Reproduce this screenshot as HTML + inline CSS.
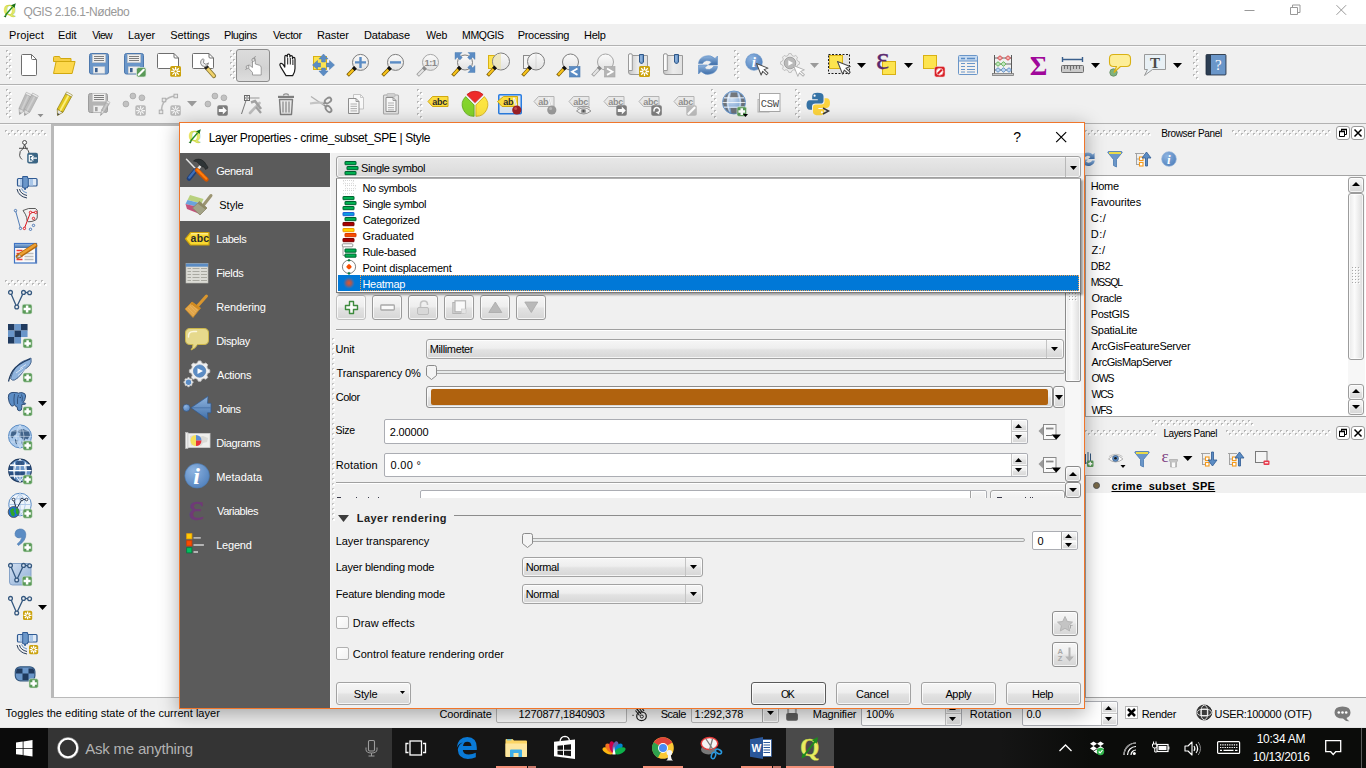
<!DOCTYPE html>
<html lang="en"><head><meta charset="utf-8"><title>QGIS 2.16.1-Nødebo</title>
<style>
html,body{margin:0;padding:0}
body{width:1366px;height:768px;overflow:hidden;position:relative;background:#f0f0f0;font-family:"Liberation Sans",sans-serif;font-size:11px;color:#000}
div,span,svg{position:absolute;box-sizing:border-box}
.t{line-height:1;white-space:nowrap}
.i{overflow:visible}
.btn{border:1px solid #a2a2a2;border-radius:3px;background:linear-gradient(#f6f6f6 0%,#eeeeee 45%,#e2e2e2 55%,#d6d6d6 100%);box-shadow:inset 0 0 0 1px rgba(255,255,255,.75)}
.btn.def{border-color:#5a5a5a}
.fld{border:1px solid #abadb3;border-radius:2px;background:#fff}
</style></head>
<body>
<!-- QGIS main window -->
<div class="titlebar" style="left:0;top:0">
<div style="left:0px;top:0px;width:1366px;height:24px;background:#fff"></div>
<span class="t" style="left:23.5px;top:6px;font-size:12px;color:#999;letter-spacing:-0.43px;">QGIS 2.16.1-Nødebo</span>
<svg class="i" style="left:1244px;top:4px;" width="110" height="14" viewBox="0 0 110 14"><path d="M0.5 6.5h10" stroke="#999" fill="none"/><path d="M46.5 3.5h7v7h-7z M48.5 3.5v-2.5h7.5v7.5h-2.5" stroke="#999" fill="none"/><path d="M92.5 1.2l9.6 9.6 M102.1 1.2l-9.6 9.6" stroke="#999" fill="none"/></svg>
</div>
<div class="menubar" style="left:0;top:0">
<div style="left:0px;top:24px;width:1366px;height:21px;background:#f0f0f0"></div>
<span class="t" style="left:9.1px;top:30px;font-size:11px;letter-spacing:0.07px;">Project</span>
<span class="t" style="left:58.1px;top:30px;font-size:11px;letter-spacing:-0.18px;">Edit</span>
<span class="t" style="left:92.2px;top:30px;font-size:10.5px;letter-spacing:-0.70px;">View</span>
<span class="t" style="left:127.9px;top:30px;font-size:11px;letter-spacing:-0.03px;">Layer</span>
<span class="t" style="left:170.2px;top:30px;font-size:11px;letter-spacing:-0.02px;">Settings</span>
<span class="t" style="left:224.0px;top:30px;font-size:11px;letter-spacing:-0.46px;">Plugins</span>
<span class="t" style="left:273.0px;top:30px;font-size:11px;letter-spacing:-0.40px;">Vector</span>
<span class="t" style="left:316.9px;top:30px;font-size:11px;letter-spacing:-0.07px;">Raster</span>
<span class="t" style="left:364.0px;top:30px;font-size:11px;letter-spacing:-0.15px;">Database</span>
<span class="t" style="left:426.2px;top:30px;font-size:10.5px;letter-spacing:-0.12px;">Web</span>
<span class="t" style="left:462.1px;top:30px;font-size:10.5px;letter-spacing:-0.37px;">MMQGIS</span>
<span class="t" style="left:517.7px;top:30px;font-size:11px;letter-spacing:-0.29px;">Processing</span>
<span class="t" style="left:584.1px;top:30px;font-size:11px;letter-spacing:-0.32px;">Help</span>
</div>
<div class="toolbars" style="left:0;top:0">
<div style="left:0px;top:45px;width:1366px;height:1px;background:#b2b2b2"></div>
<div style="left:0px;top:46px;width:1366px;height:1px;background:#fafafa"></div>
<div style="left:0px;top:84px;width:1366px;height:1px;background:#b2b2b2"></div>
<div style="left:0px;top:85px;width:1366px;height:1px;background:#fafafa"></div>
<div style="left:0px;top:123px;width:1366px;height:1px;background:#b2b2b2"></div>
<div style="left:0px;top:124px;width:51px;height:1px;background:#f8f8f8"></div>
<svg class="i" style="left:6px;top:50px;" width="6" height="30" viewBox="0 0 6 30"><rect x="0" y="0" width="2" height="2" fill="#b9b9b9"/><rect x="1" y="1" width="2" height="2" fill="#fff"/><rect x="3" y="3" width="2" height="2" fill="#b9b9b9"/><rect x="4" y="4" width="2" height="2" fill="#fff"/><rect x="0" y="6" width="2" height="2" fill="#b9b9b9"/><rect x="1" y="7" width="2" height="2" fill="#fff"/><rect x="3" y="9" width="2" height="2" fill="#b9b9b9"/><rect x="4" y="10" width="2" height="2" fill="#fff"/><rect x="0" y="12" width="2" height="2" fill="#b9b9b9"/><rect x="1" y="13" width="2" height="2" fill="#fff"/><rect x="3" y="15" width="2" height="2" fill="#b9b9b9"/><rect x="4" y="16" width="2" height="2" fill="#fff"/><rect x="0" y="18" width="2" height="2" fill="#b9b9b9"/><rect x="1" y="19" width="2" height="2" fill="#fff"/><rect x="3" y="21" width="2" height="2" fill="#b9b9b9"/><rect x="4" y="22" width="2" height="2" fill="#fff"/><rect x="0" y="24" width="2" height="2" fill="#b9b9b9"/><rect x="1" y="25" width="2" height="2" fill="#fff"/><rect x="3" y="27" width="2" height="2" fill="#b9b9b9"/><rect x="4" y="28" width="2" height="2" fill="#fff"/></svg>
<svg class="i" style="left:230px;top:50px;" width="6" height="30" viewBox="0 0 6 30"><rect x="0" y="0" width="2" height="2" fill="#b9b9b9"/><rect x="1" y="1" width="2" height="2" fill="#fff"/><rect x="3" y="3" width="2" height="2" fill="#b9b9b9"/><rect x="4" y="4" width="2" height="2" fill="#fff"/><rect x="0" y="6" width="2" height="2" fill="#b9b9b9"/><rect x="1" y="7" width="2" height="2" fill="#fff"/><rect x="3" y="9" width="2" height="2" fill="#b9b9b9"/><rect x="4" y="10" width="2" height="2" fill="#fff"/><rect x="0" y="12" width="2" height="2" fill="#b9b9b9"/><rect x="1" y="13" width="2" height="2" fill="#fff"/><rect x="3" y="15" width="2" height="2" fill="#b9b9b9"/><rect x="4" y="16" width="2" height="2" fill="#fff"/><rect x="0" y="18" width="2" height="2" fill="#b9b9b9"/><rect x="1" y="19" width="2" height="2" fill="#fff"/><rect x="3" y="21" width="2" height="2" fill="#b9b9b9"/><rect x="4" y="22" width="2" height="2" fill="#fff"/><rect x="0" y="24" width="2" height="2" fill="#b9b9b9"/><rect x="1" y="25" width="2" height="2" fill="#fff"/><rect x="3" y="27" width="2" height="2" fill="#b9b9b9"/><rect x="4" y="28" width="2" height="2" fill="#fff"/></svg>
<svg class="i" style="left:734px;top:50px;" width="6" height="30" viewBox="0 0 6 30"><rect x="0" y="0" width="2" height="2" fill="#b9b9b9"/><rect x="1" y="1" width="2" height="2" fill="#fff"/><rect x="3" y="3" width="2" height="2" fill="#b9b9b9"/><rect x="4" y="4" width="2" height="2" fill="#fff"/><rect x="0" y="6" width="2" height="2" fill="#b9b9b9"/><rect x="1" y="7" width="2" height="2" fill="#fff"/><rect x="3" y="9" width="2" height="2" fill="#b9b9b9"/><rect x="4" y="10" width="2" height="2" fill="#fff"/><rect x="0" y="12" width="2" height="2" fill="#b9b9b9"/><rect x="1" y="13" width="2" height="2" fill="#fff"/><rect x="3" y="15" width="2" height="2" fill="#b9b9b9"/><rect x="4" y="16" width="2" height="2" fill="#fff"/><rect x="0" y="18" width="2" height="2" fill="#b9b9b9"/><rect x="1" y="19" width="2" height="2" fill="#fff"/><rect x="3" y="21" width="2" height="2" fill="#b9b9b9"/><rect x="4" y="22" width="2" height="2" fill="#fff"/><rect x="0" y="24" width="2" height="2" fill="#b9b9b9"/><rect x="1" y="25" width="2" height="2" fill="#fff"/><rect x="3" y="27" width="2" height="2" fill="#b9b9b9"/><rect x="4" y="28" width="2" height="2" fill="#fff"/></svg>
<svg class="i" style="left:1193px;top:50px;" width="6" height="30" viewBox="0 0 6 30"><rect x="0" y="0" width="2" height="2" fill="#b9b9b9"/><rect x="1" y="1" width="2" height="2" fill="#fff"/><rect x="3" y="3" width="2" height="2" fill="#b9b9b9"/><rect x="4" y="4" width="2" height="2" fill="#fff"/><rect x="0" y="6" width="2" height="2" fill="#b9b9b9"/><rect x="1" y="7" width="2" height="2" fill="#fff"/><rect x="3" y="9" width="2" height="2" fill="#b9b9b9"/><rect x="4" y="10" width="2" height="2" fill="#fff"/><rect x="0" y="12" width="2" height="2" fill="#b9b9b9"/><rect x="1" y="13" width="2" height="2" fill="#fff"/><rect x="3" y="15" width="2" height="2" fill="#b9b9b9"/><rect x="4" y="16" width="2" height="2" fill="#fff"/><rect x="0" y="18" width="2" height="2" fill="#b9b9b9"/><rect x="1" y="19" width="2" height="2" fill="#fff"/><rect x="3" y="21" width="2" height="2" fill="#b9b9b9"/><rect x="4" y="22" width="2" height="2" fill="#fff"/><rect x="0" y="24" width="2" height="2" fill="#b9b9b9"/><rect x="1" y="25" width="2" height="2" fill="#fff"/><rect x="3" y="27" width="2" height="2" fill="#b9b9b9"/><rect x="4" y="28" width="2" height="2" fill="#fff"/></svg>
<svg class="i" style="left:6px;top:89px;" width="6" height="30" viewBox="0 0 6 30"><rect x="0" y="0" width="2" height="2" fill="#b9b9b9"/><rect x="1" y="1" width="2" height="2" fill="#fff"/><rect x="3" y="3" width="2" height="2" fill="#b9b9b9"/><rect x="4" y="4" width="2" height="2" fill="#fff"/><rect x="0" y="6" width="2" height="2" fill="#b9b9b9"/><rect x="1" y="7" width="2" height="2" fill="#fff"/><rect x="3" y="9" width="2" height="2" fill="#b9b9b9"/><rect x="4" y="10" width="2" height="2" fill="#fff"/><rect x="0" y="12" width="2" height="2" fill="#b9b9b9"/><rect x="1" y="13" width="2" height="2" fill="#fff"/><rect x="3" y="15" width="2" height="2" fill="#b9b9b9"/><rect x="4" y="16" width="2" height="2" fill="#fff"/><rect x="0" y="18" width="2" height="2" fill="#b9b9b9"/><rect x="1" y="19" width="2" height="2" fill="#fff"/><rect x="3" y="21" width="2" height="2" fill="#b9b9b9"/><rect x="4" y="22" width="2" height="2" fill="#fff"/><rect x="0" y="24" width="2" height="2" fill="#b9b9b9"/><rect x="1" y="25" width="2" height="2" fill="#fff"/><rect x="3" y="27" width="2" height="2" fill="#b9b9b9"/><rect x="4" y="28" width="2" height="2" fill="#fff"/></svg>
<svg class="i" style="left:417px;top:89px;" width="6" height="30" viewBox="0 0 6 30"><rect x="0" y="0" width="2" height="2" fill="#b9b9b9"/><rect x="1" y="1" width="2" height="2" fill="#fff"/><rect x="3" y="3" width="2" height="2" fill="#b9b9b9"/><rect x="4" y="4" width="2" height="2" fill="#fff"/><rect x="0" y="6" width="2" height="2" fill="#b9b9b9"/><rect x="1" y="7" width="2" height="2" fill="#fff"/><rect x="3" y="9" width="2" height="2" fill="#b9b9b9"/><rect x="4" y="10" width="2" height="2" fill="#fff"/><rect x="0" y="12" width="2" height="2" fill="#b9b9b9"/><rect x="1" y="13" width="2" height="2" fill="#fff"/><rect x="3" y="15" width="2" height="2" fill="#b9b9b9"/><rect x="4" y="16" width="2" height="2" fill="#fff"/><rect x="0" y="18" width="2" height="2" fill="#b9b9b9"/><rect x="1" y="19" width="2" height="2" fill="#fff"/><rect x="3" y="21" width="2" height="2" fill="#b9b9b9"/><rect x="4" y="22" width="2" height="2" fill="#fff"/><rect x="0" y="24" width="2" height="2" fill="#b9b9b9"/><rect x="1" y="25" width="2" height="2" fill="#fff"/><rect x="3" y="27" width="2" height="2" fill="#b9b9b9"/><rect x="4" y="28" width="2" height="2" fill="#fff"/></svg>
<svg class="i" style="left:711px;top:89px;" width="6" height="30" viewBox="0 0 6 30"><rect x="0" y="0" width="2" height="2" fill="#b9b9b9"/><rect x="1" y="1" width="2" height="2" fill="#fff"/><rect x="3" y="3" width="2" height="2" fill="#b9b9b9"/><rect x="4" y="4" width="2" height="2" fill="#fff"/><rect x="0" y="6" width="2" height="2" fill="#b9b9b9"/><rect x="1" y="7" width="2" height="2" fill="#fff"/><rect x="3" y="9" width="2" height="2" fill="#b9b9b9"/><rect x="4" y="10" width="2" height="2" fill="#fff"/><rect x="0" y="12" width="2" height="2" fill="#b9b9b9"/><rect x="1" y="13" width="2" height="2" fill="#fff"/><rect x="3" y="15" width="2" height="2" fill="#b9b9b9"/><rect x="4" y="16" width="2" height="2" fill="#fff"/><rect x="0" y="18" width="2" height="2" fill="#b9b9b9"/><rect x="1" y="19" width="2" height="2" fill="#fff"/><rect x="3" y="21" width="2" height="2" fill="#b9b9b9"/><rect x="4" y="22" width="2" height="2" fill="#fff"/><rect x="0" y="24" width="2" height="2" fill="#b9b9b9"/><rect x="1" y="25" width="2" height="2" fill="#fff"/><rect x="3" y="27" width="2" height="2" fill="#b9b9b9"/><rect x="4" y="28" width="2" height="2" fill="#fff"/></svg>
<svg class="i" style="left:795px;top:89px;" width="6" height="30" viewBox="0 0 6 30"><rect x="0" y="0" width="2" height="2" fill="#b9b9b9"/><rect x="1" y="1" width="2" height="2" fill="#fff"/><rect x="3" y="3" width="2" height="2" fill="#b9b9b9"/><rect x="4" y="4" width="2" height="2" fill="#fff"/><rect x="0" y="6" width="2" height="2" fill="#b9b9b9"/><rect x="1" y="7" width="2" height="2" fill="#fff"/><rect x="3" y="9" width="2" height="2" fill="#b9b9b9"/><rect x="4" y="10" width="2" height="2" fill="#fff"/><rect x="0" y="12" width="2" height="2" fill="#b9b9b9"/><rect x="1" y="13" width="2" height="2" fill="#fff"/><rect x="3" y="15" width="2" height="2" fill="#b9b9b9"/><rect x="4" y="16" width="2" height="2" fill="#fff"/><rect x="0" y="18" width="2" height="2" fill="#b9b9b9"/><rect x="1" y="19" width="2" height="2" fill="#fff"/><rect x="3" y="21" width="2" height="2" fill="#b9b9b9"/><rect x="4" y="22" width="2" height="2" fill="#fff"/><rect x="0" y="24" width="2" height="2" fill="#b9b9b9"/><rect x="1" y="25" width="2" height="2" fill="#fff"/><rect x="3" y="27" width="2" height="2" fill="#b9b9b9"/><rect x="4" y="28" width="2" height="2" fill="#fff"/></svg>
</div>
<div class="map-canvas" style="left:0;top:0">
<div style="left:51px;top:124px;width:1034px;height:574px;background:#fff;border:solid #bababa;border-width:2px 0 1px 3px"></div>
<svg class="i" style="left:5px;top:130px;" width="43" height="6" viewBox="0 0 43 6"><rect x="0" y="0" width="2" height="2" fill="#b9b9b9"/><rect x="1" y="1" width="2" height="2" fill="#fff"/><rect x="3" y="3" width="2" height="2" fill="#b9b9b9"/><rect x="4" y="4" width="2" height="2" fill="#fff"/><rect x="6" y="0" width="2" height="2" fill="#b9b9b9"/><rect x="7" y="1" width="2" height="2" fill="#fff"/><rect x="9" y="3" width="2" height="2" fill="#b9b9b9"/><rect x="10" y="4" width="2" height="2" fill="#fff"/><rect x="12" y="0" width="2" height="2" fill="#b9b9b9"/><rect x="13" y="1" width="2" height="2" fill="#fff"/><rect x="15" y="3" width="2" height="2" fill="#b9b9b9"/><rect x="16" y="4" width="2" height="2" fill="#fff"/><rect x="18" y="0" width="2" height="2" fill="#b9b9b9"/><rect x="19" y="1" width="2" height="2" fill="#fff"/><rect x="21" y="3" width="2" height="2" fill="#b9b9b9"/><rect x="22" y="4" width="2" height="2" fill="#fff"/><rect x="24" y="0" width="2" height="2" fill="#b9b9b9"/><rect x="25" y="1" width="2" height="2" fill="#fff"/><rect x="27" y="3" width="2" height="2" fill="#b9b9b9"/><rect x="28" y="4" width="2" height="2" fill="#fff"/><rect x="30" y="0" width="2" height="2" fill="#b9b9b9"/><rect x="31" y="1" width="2" height="2" fill="#fff"/><rect x="33" y="3" width="2" height="2" fill="#b9b9b9"/><rect x="34" y="4" width="2" height="2" fill="#fff"/><rect x="36" y="0" width="2" height="2" fill="#b9b9b9"/><rect x="37" y="1" width="2" height="2" fill="#fff"/><rect x="39" y="3" width="2" height="2" fill="#b9b9b9"/><rect x="40" y="4" width="2" height="2" fill="#fff"/></svg>
<svg class="i" style="left:5px;top:280px;" width="43" height="6" viewBox="0 0 43 6"><rect x="0" y="0" width="2" height="2" fill="#b9b9b9"/><rect x="1" y="1" width="2" height="2" fill="#fff"/><rect x="3" y="3" width="2" height="2" fill="#b9b9b9"/><rect x="4" y="4" width="2" height="2" fill="#fff"/><rect x="6" y="0" width="2" height="2" fill="#b9b9b9"/><rect x="7" y="1" width="2" height="2" fill="#fff"/><rect x="9" y="3" width="2" height="2" fill="#b9b9b9"/><rect x="10" y="4" width="2" height="2" fill="#fff"/><rect x="12" y="0" width="2" height="2" fill="#b9b9b9"/><rect x="13" y="1" width="2" height="2" fill="#fff"/><rect x="15" y="3" width="2" height="2" fill="#b9b9b9"/><rect x="16" y="4" width="2" height="2" fill="#fff"/><rect x="18" y="0" width="2" height="2" fill="#b9b9b9"/><rect x="19" y="1" width="2" height="2" fill="#fff"/><rect x="21" y="3" width="2" height="2" fill="#b9b9b9"/><rect x="22" y="4" width="2" height="2" fill="#fff"/><rect x="24" y="0" width="2" height="2" fill="#b9b9b9"/><rect x="25" y="1" width="2" height="2" fill="#fff"/><rect x="27" y="3" width="2" height="2" fill="#b9b9b9"/><rect x="28" y="4" width="2" height="2" fill="#fff"/><rect x="30" y="0" width="2" height="2" fill="#b9b9b9"/><rect x="31" y="1" width="2" height="2" fill="#fff"/><rect x="33" y="3" width="2" height="2" fill="#b9b9b9"/><rect x="34" y="4" width="2" height="2" fill="#fff"/><rect x="36" y="0" width="2" height="2" fill="#b9b9b9"/><rect x="37" y="1" width="2" height="2" fill="#fff"/><rect x="39" y="3" width="2" height="2" fill="#b9b9b9"/><rect x="40" y="4" width="2" height="2" fill="#fff"/></svg>
<svg class="i" style="left:38px;top:401px;" width="9" height="5" viewBox="0 0 9 5"><path d="M0 0h9l-4.5 5z" fill="#000"/></svg>
<svg class="i" style="left:38px;top:435px;" width="9" height="5" viewBox="0 0 9 5"><path d="M0 0h9l-4.5 5z" fill="#000"/></svg>
<svg class="i" style="left:38px;top:503px;" width="9" height="5" viewBox="0 0 9 5"><path d="M0 0h9l-4.5 5z" fill="#000"/></svg>
<svg class="i" style="left:38px;top:605px;" width="9" height="5" viewBox="0 0 9 5"><path d="M0 0h9l-4.5 5z" fill="#000"/></svg>
</div>
<div class="dock-panels" style="left:0;top:0">
<svg class="i" style="left:1085px;top:130px;" width="66" height="6" viewBox="0 0 66 6"><rect x="0" y="0" width="2" height="2" fill="#b9b9b9"/><rect x="1" y="1" width="2" height="2" fill="#fff"/><rect x="3" y="3" width="2" height="2" fill="#b9b9b9"/><rect x="4" y="4" width="2" height="2" fill="#fff"/><rect x="6" y="0" width="2" height="2" fill="#b9b9b9"/><rect x="7" y="1" width="2" height="2" fill="#fff"/><rect x="9" y="3" width="2" height="2" fill="#b9b9b9"/><rect x="10" y="4" width="2" height="2" fill="#fff"/><rect x="12" y="0" width="2" height="2" fill="#b9b9b9"/><rect x="13" y="1" width="2" height="2" fill="#fff"/><rect x="15" y="3" width="2" height="2" fill="#b9b9b9"/><rect x="16" y="4" width="2" height="2" fill="#fff"/><rect x="18" y="0" width="2" height="2" fill="#b9b9b9"/><rect x="19" y="1" width="2" height="2" fill="#fff"/><rect x="21" y="3" width="2" height="2" fill="#b9b9b9"/><rect x="22" y="4" width="2" height="2" fill="#fff"/><rect x="24" y="0" width="2" height="2" fill="#b9b9b9"/><rect x="25" y="1" width="2" height="2" fill="#fff"/><rect x="27" y="3" width="2" height="2" fill="#b9b9b9"/><rect x="28" y="4" width="2" height="2" fill="#fff"/><rect x="30" y="0" width="2" height="2" fill="#b9b9b9"/><rect x="31" y="1" width="2" height="2" fill="#fff"/><rect x="33" y="3" width="2" height="2" fill="#b9b9b9"/><rect x="34" y="4" width="2" height="2" fill="#fff"/><rect x="36" y="0" width="2" height="2" fill="#b9b9b9"/><rect x="37" y="1" width="2" height="2" fill="#fff"/><rect x="39" y="3" width="2" height="2" fill="#b9b9b9"/><rect x="40" y="4" width="2" height="2" fill="#fff"/><rect x="42" y="0" width="2" height="2" fill="#b9b9b9"/><rect x="43" y="1" width="2" height="2" fill="#fff"/><rect x="45" y="3" width="2" height="2" fill="#b9b9b9"/><rect x="46" y="4" width="2" height="2" fill="#fff"/><rect x="48" y="0" width="2" height="2" fill="#b9b9b9"/><rect x="49" y="1" width="2" height="2" fill="#fff"/><rect x="51" y="3" width="2" height="2" fill="#b9b9b9"/><rect x="52" y="4" width="2" height="2" fill="#fff"/><rect x="54" y="0" width="2" height="2" fill="#b9b9b9"/><rect x="55" y="1" width="2" height="2" fill="#fff"/><rect x="57" y="3" width="2" height="2" fill="#b9b9b9"/><rect x="58" y="4" width="2" height="2" fill="#fff"/><rect x="60" y="0" width="2" height="2" fill="#b9b9b9"/><rect x="61" y="1" width="2" height="2" fill="#fff"/><rect x="63" y="3" width="2" height="2" fill="#b9b9b9"/><rect x="64" y="4" width="2" height="2" fill="#fff"/></svg><svg class="i" style="left:1232px;top:130px;" width="101" height="6" viewBox="0 0 101 6"><rect x="0" y="0" width="2" height="2" fill="#b9b9b9"/><rect x="1" y="1" width="2" height="2" fill="#fff"/><rect x="3" y="3" width="2" height="2" fill="#b9b9b9"/><rect x="4" y="4" width="2" height="2" fill="#fff"/><rect x="6" y="0" width="2" height="2" fill="#b9b9b9"/><rect x="7" y="1" width="2" height="2" fill="#fff"/><rect x="9" y="3" width="2" height="2" fill="#b9b9b9"/><rect x="10" y="4" width="2" height="2" fill="#fff"/><rect x="12" y="0" width="2" height="2" fill="#b9b9b9"/><rect x="13" y="1" width="2" height="2" fill="#fff"/><rect x="15" y="3" width="2" height="2" fill="#b9b9b9"/><rect x="16" y="4" width="2" height="2" fill="#fff"/><rect x="18" y="0" width="2" height="2" fill="#b9b9b9"/><rect x="19" y="1" width="2" height="2" fill="#fff"/><rect x="21" y="3" width="2" height="2" fill="#b9b9b9"/><rect x="22" y="4" width="2" height="2" fill="#fff"/><rect x="24" y="0" width="2" height="2" fill="#b9b9b9"/><rect x="25" y="1" width="2" height="2" fill="#fff"/><rect x="27" y="3" width="2" height="2" fill="#b9b9b9"/><rect x="28" y="4" width="2" height="2" fill="#fff"/><rect x="30" y="0" width="2" height="2" fill="#b9b9b9"/><rect x="31" y="1" width="2" height="2" fill="#fff"/><rect x="33" y="3" width="2" height="2" fill="#b9b9b9"/><rect x="34" y="4" width="2" height="2" fill="#fff"/><rect x="36" y="0" width="2" height="2" fill="#b9b9b9"/><rect x="37" y="1" width="2" height="2" fill="#fff"/><rect x="39" y="3" width="2" height="2" fill="#b9b9b9"/><rect x="40" y="4" width="2" height="2" fill="#fff"/><rect x="42" y="0" width="2" height="2" fill="#b9b9b9"/><rect x="43" y="1" width="2" height="2" fill="#fff"/><rect x="45" y="3" width="2" height="2" fill="#b9b9b9"/><rect x="46" y="4" width="2" height="2" fill="#fff"/><rect x="48" y="0" width="2" height="2" fill="#b9b9b9"/><rect x="49" y="1" width="2" height="2" fill="#fff"/><rect x="51" y="3" width="2" height="2" fill="#b9b9b9"/><rect x="52" y="4" width="2" height="2" fill="#fff"/><rect x="54" y="0" width="2" height="2" fill="#b9b9b9"/><rect x="55" y="1" width="2" height="2" fill="#fff"/><rect x="57" y="3" width="2" height="2" fill="#b9b9b9"/><rect x="58" y="4" width="2" height="2" fill="#fff"/><rect x="60" y="0" width="2" height="2" fill="#b9b9b9"/><rect x="61" y="1" width="2" height="2" fill="#fff"/><rect x="63" y="3" width="2" height="2" fill="#b9b9b9"/><rect x="64" y="4" width="2" height="2" fill="#fff"/><rect x="66" y="0" width="2" height="2" fill="#b9b9b9"/><rect x="67" y="1" width="2" height="2" fill="#fff"/><rect x="69" y="3" width="2" height="2" fill="#b9b9b9"/><rect x="70" y="4" width="2" height="2" fill="#fff"/><rect x="72" y="0" width="2" height="2" fill="#b9b9b9"/><rect x="73" y="1" width="2" height="2" fill="#fff"/><rect x="75" y="3" width="2" height="2" fill="#b9b9b9"/><rect x="76" y="4" width="2" height="2" fill="#fff"/><rect x="78" y="0" width="2" height="2" fill="#b9b9b9"/><rect x="79" y="1" width="2" height="2" fill="#fff"/><rect x="81" y="3" width="2" height="2" fill="#b9b9b9"/><rect x="82" y="4" width="2" height="2" fill="#fff"/><rect x="84" y="0" width="2" height="2" fill="#b9b9b9"/><rect x="85" y="1" width="2" height="2" fill="#fff"/><rect x="87" y="3" width="2" height="2" fill="#b9b9b9"/><rect x="88" y="4" width="2" height="2" fill="#fff"/><rect x="90" y="0" width="2" height="2" fill="#b9b9b9"/><rect x="91" y="1" width="2" height="2" fill="#fff"/><rect x="93" y="3" width="2" height="2" fill="#b9b9b9"/><rect x="94" y="4" width="2" height="2" fill="#fff"/><rect x="96" y="0" width="2" height="2" fill="#b9b9b9"/><rect x="97" y="1" width="2" height="2" fill="#fff"/></svg><span class="t" style="left:1161.2px;top:129px;font-size:10px;letter-spacing:-0.34px;">Browser Panel</span><div style="left:1336px;top:126px;width:14px;height:14px;background:#fff;border:1px solid #9a9a9a;border-radius:3px"></div><div style="left:1351px;top:126px;width:14px;height:14px;background:#fff;border:1px solid #9a9a9a;border-radius:3px"></div><svg class="i" style="left:1336px;top:126px;" width="14" height="14" viewBox="0 0 14 14"><path d="M3.5 5.5h5v5h-5z M5.5 5.5v-2h5v5h-2" stroke="#000" fill="none"/><path d="M3 5.5h6M5 3.5h6" stroke="#000" stroke-width="1.6"/></svg><svg class="i" style="left:1351px;top:126px;" width="14" height="14" viewBox="0 0 14 14"><path d="M3.5 3.5l7 7M10.5 3.5l-7 7" stroke="#000" stroke-width="1.5" fill="none"/></svg>
<div style="left:1085px;top:175px;width:281px;height:242px;background:#fff;border:1px solid #a4a4a4;border-width:1px 0 1px 1px"></div>
<span class="t" style="left:1090.7px;top:181px;font-size:11px;letter-spacing:-0.33px;">Home</span>
<span class="t" style="left:1090.7px;top:197px;font-size:11px;letter-spacing:-0.10px;">Favourites</span>
<span class="t" style="left:1090.7px;top:213px;font-size:11px;letter-spacing:0.56px;">C:/</span>
<span class="t" style="left:1090.7px;top:229px;font-size:11px;letter-spacing:0.55px;">D:/</span>
<span class="t" style="left:1091.5px;top:245px;font-size:11px;letter-spacing:0.39px;">Z:/</span>
<span class="t" style="left:1090.7px;top:261px;font-size:10.5px;letter-spacing:-0.20px;">DB2</span>
<span class="t" style="left:1090.7px;top:277px;font-size:10.5px;letter-spacing:-1.06px;">MSSQL</span>
<span class="t" style="left:1091.5px;top:293px;font-size:11px;letter-spacing:-0.35px;">Oracle</span>
<span class="t" style="left:1090.7px;top:309px;font-size:11px;letter-spacing:-0.33px;">PostGIS</span>
<span class="t" style="left:1090.7px;top:325px;font-size:11px;letter-spacing:-0.25px;">SpatiaLite</span>
<span class="t" style="left:1091.6px;top:341px;font-size:11px;letter-spacing:-0.24px;">ArcGisFeatureServer</span>
<span class="t" style="left:1091.6px;top:357px;font-size:11px;letter-spacing:-0.45px;">ArcGisMapServer</span>
<span class="t" style="left:1091.5px;top:373px;font-size:10.5px;letter-spacing:-1.03px;">OWS</span>
<span class="t" style="left:1091.6px;top:389px;font-size:10.5px;letter-spacing:-1.18px;">WCS</span>
<span class="t" style="left:1091.6px;top:405px;font-size:10.5px;letter-spacing:-1.17px;">WFS</span>
<div style="left:1348px;top:176px;width:17px;height:240px;background:#f7f7f7"></div><div class="btn" style="left:1348px;top:177px;width:16px;height:16px;border-color:#9c9c9c"></div><svg class="i" style="left:1352px;top:182px;" width="8" height="4" viewBox="0 0 8 4"><path d="M0 4h8l-4.0 -4z" fill="#000"/></svg><div class="btn" style="left:1348px;top:193px;width:16px;height:167px;background:linear-gradient(90deg,#e9e9e9,#fbfbfb 40%,#e4e4e4 85%,#d8d8d8);border-color:#9c9c9c"></div><svg class="i" style="left:1352px;top:267px;" width="12" height="18" viewBox="0 0 12 18"><rect x="0" y="0" width="1" height="1" fill="#a8a8a8"/><rect x="1" y="1" width="1" height="1" fill="#fff"/><rect x="0" y="3" width="1" height="1" fill="#a8a8a8"/><rect x="1" y="4" width="1" height="1" fill="#fff"/><rect x="0" y="6" width="1" height="1" fill="#a8a8a8"/><rect x="1" y="7" width="1" height="1" fill="#fff"/><rect x="0" y="9" width="1" height="1" fill="#a8a8a8"/><rect x="1" y="10" width="1" height="1" fill="#fff"/><rect x="0" y="12" width="1" height="1" fill="#a8a8a8"/><rect x="1" y="13" width="1" height="1" fill="#fff"/><rect x="0" y="15" width="1" height="1" fill="#a8a8a8"/><rect x="1" y="16" width="1" height="1" fill="#fff"/><rect x="3" y="0" width="1" height="1" fill="#a8a8a8"/><rect x="4" y="1" width="1" height="1" fill="#fff"/><rect x="3" y="3" width="1" height="1" fill="#a8a8a8"/><rect x="4" y="4" width="1" height="1" fill="#fff"/><rect x="3" y="6" width="1" height="1" fill="#a8a8a8"/><rect x="4" y="7" width="1" height="1" fill="#fff"/><rect x="3" y="9" width="1" height="1" fill="#a8a8a8"/><rect x="4" y="10" width="1" height="1" fill="#fff"/><rect x="3" y="12" width="1" height="1" fill="#a8a8a8"/><rect x="4" y="13" width="1" height="1" fill="#fff"/><rect x="3" y="15" width="1" height="1" fill="#a8a8a8"/><rect x="4" y="16" width="1" height="1" fill="#fff"/><rect x="6" y="0" width="1" height="1" fill="#a8a8a8"/><rect x="7" y="1" width="1" height="1" fill="#fff"/><rect x="6" y="3" width="1" height="1" fill="#a8a8a8"/><rect x="7" y="4" width="1" height="1" fill="#fff"/><rect x="6" y="6" width="1" height="1" fill="#a8a8a8"/><rect x="7" y="7" width="1" height="1" fill="#fff"/><rect x="6" y="9" width="1" height="1" fill="#a8a8a8"/><rect x="7" y="10" width="1" height="1" fill="#fff"/><rect x="6" y="12" width="1" height="1" fill="#a8a8a8"/><rect x="7" y="13" width="1" height="1" fill="#fff"/><rect x="6" y="15" width="1" height="1" fill="#a8a8a8"/><rect x="7" y="16" width="1" height="1" fill="#fff"/></svg><div class="btn" style="left:1348px;top:384px;width:16px;height:16px;border-color:#9c9c9c"></div><svg class="i" style="left:1352px;top:389px;" width="8" height="4" viewBox="0 0 8 4"><path d="M0 4h8l-4.0 -4z" fill="#000"/></svg><div class="btn" style="left:1348px;top:399px;width:16px;height:16px;border-color:#9c9c9c"></div><svg class="i" style="left:1352px;top:405px;" width="8" height="4" viewBox="0 0 8 4"><path d="M0 0h8l-4.0 4z" fill="#000"/></svg>
<svg class="i" style="left:1152px;top:420px;" width="104" height="6" viewBox="0 0 104 6"><rect x="0" y="0" width="2" height="2" fill="#b9b9b9"/><rect x="1" y="1" width="2" height="2" fill="#fff"/><rect x="3" y="3" width="2" height="2" fill="#b9b9b9"/><rect x="4" y="4" width="2" height="2" fill="#fff"/><rect x="6" y="0" width="2" height="2" fill="#b9b9b9"/><rect x="7" y="1" width="2" height="2" fill="#fff"/><rect x="9" y="3" width="2" height="2" fill="#b9b9b9"/><rect x="10" y="4" width="2" height="2" fill="#fff"/><rect x="12" y="0" width="2" height="2" fill="#b9b9b9"/><rect x="13" y="1" width="2" height="2" fill="#fff"/><rect x="15" y="3" width="2" height="2" fill="#b9b9b9"/><rect x="16" y="4" width="2" height="2" fill="#fff"/><rect x="18" y="0" width="2" height="2" fill="#b9b9b9"/><rect x="19" y="1" width="2" height="2" fill="#fff"/><rect x="21" y="3" width="2" height="2" fill="#b9b9b9"/><rect x="22" y="4" width="2" height="2" fill="#fff"/><rect x="24" y="0" width="2" height="2" fill="#b9b9b9"/><rect x="25" y="1" width="2" height="2" fill="#fff"/><rect x="27" y="3" width="2" height="2" fill="#b9b9b9"/><rect x="28" y="4" width="2" height="2" fill="#fff"/><rect x="30" y="0" width="2" height="2" fill="#b9b9b9"/><rect x="31" y="1" width="2" height="2" fill="#fff"/><rect x="33" y="3" width="2" height="2" fill="#b9b9b9"/><rect x="34" y="4" width="2" height="2" fill="#fff"/><rect x="36" y="0" width="2" height="2" fill="#b9b9b9"/><rect x="37" y="1" width="2" height="2" fill="#fff"/><rect x="39" y="3" width="2" height="2" fill="#b9b9b9"/><rect x="40" y="4" width="2" height="2" fill="#fff"/><rect x="42" y="0" width="2" height="2" fill="#b9b9b9"/><rect x="43" y="1" width="2" height="2" fill="#fff"/><rect x="45" y="3" width="2" height="2" fill="#b9b9b9"/><rect x="46" y="4" width="2" height="2" fill="#fff"/><rect x="48" y="0" width="2" height="2" fill="#b9b9b9"/><rect x="49" y="1" width="2" height="2" fill="#fff"/><rect x="51" y="3" width="2" height="2" fill="#b9b9b9"/><rect x="52" y="4" width="2" height="2" fill="#fff"/><rect x="54" y="0" width="2" height="2" fill="#b9b9b9"/><rect x="55" y="1" width="2" height="2" fill="#fff"/><rect x="57" y="3" width="2" height="2" fill="#b9b9b9"/><rect x="58" y="4" width="2" height="2" fill="#fff"/><rect x="60" y="0" width="2" height="2" fill="#b9b9b9"/><rect x="61" y="1" width="2" height="2" fill="#fff"/><rect x="63" y="3" width="2" height="2" fill="#b9b9b9"/><rect x="64" y="4" width="2" height="2" fill="#fff"/><rect x="66" y="0" width="2" height="2" fill="#b9b9b9"/><rect x="67" y="1" width="2" height="2" fill="#fff"/><rect x="69" y="3" width="2" height="2" fill="#b9b9b9"/><rect x="70" y="4" width="2" height="2" fill="#fff"/><rect x="72" y="0" width="2" height="2" fill="#b9b9b9"/><rect x="73" y="1" width="2" height="2" fill="#fff"/><rect x="75" y="3" width="2" height="2" fill="#b9b9b9"/><rect x="76" y="4" width="2" height="2" fill="#fff"/><rect x="78" y="0" width="2" height="2" fill="#b9b9b9"/><rect x="79" y="1" width="2" height="2" fill="#fff"/><rect x="81" y="3" width="2" height="2" fill="#b9b9b9"/><rect x="82" y="4" width="2" height="2" fill="#fff"/><rect x="84" y="0" width="2" height="2" fill="#b9b9b9"/><rect x="85" y="1" width="2" height="2" fill="#fff"/><rect x="87" y="3" width="2" height="2" fill="#b9b9b9"/><rect x="88" y="4" width="2" height="2" fill="#fff"/><rect x="90" y="0" width="2" height="2" fill="#b9b9b9"/><rect x="91" y="1" width="2" height="2" fill="#fff"/><rect x="93" y="3" width="2" height="2" fill="#b9b9b9"/><rect x="94" y="4" width="2" height="2" fill="#fff"/><rect x="96" y="0" width="2" height="2" fill="#b9b9b9"/><rect x="97" y="1" width="2" height="2" fill="#fff"/><rect x="99" y="3" width="2" height="2" fill="#b9b9b9"/><rect x="100" y="4" width="2" height="2" fill="#fff"/></svg>
<svg class="i" style="left:1085px;top:430px;" width="72" height="6" viewBox="0 0 72 6"><rect x="0" y="0" width="2" height="2" fill="#b9b9b9"/><rect x="1" y="1" width="2" height="2" fill="#fff"/><rect x="3" y="3" width="2" height="2" fill="#b9b9b9"/><rect x="4" y="4" width="2" height="2" fill="#fff"/><rect x="6" y="0" width="2" height="2" fill="#b9b9b9"/><rect x="7" y="1" width="2" height="2" fill="#fff"/><rect x="9" y="3" width="2" height="2" fill="#b9b9b9"/><rect x="10" y="4" width="2" height="2" fill="#fff"/><rect x="12" y="0" width="2" height="2" fill="#b9b9b9"/><rect x="13" y="1" width="2" height="2" fill="#fff"/><rect x="15" y="3" width="2" height="2" fill="#b9b9b9"/><rect x="16" y="4" width="2" height="2" fill="#fff"/><rect x="18" y="0" width="2" height="2" fill="#b9b9b9"/><rect x="19" y="1" width="2" height="2" fill="#fff"/><rect x="21" y="3" width="2" height="2" fill="#b9b9b9"/><rect x="22" y="4" width="2" height="2" fill="#fff"/><rect x="24" y="0" width="2" height="2" fill="#b9b9b9"/><rect x="25" y="1" width="2" height="2" fill="#fff"/><rect x="27" y="3" width="2" height="2" fill="#b9b9b9"/><rect x="28" y="4" width="2" height="2" fill="#fff"/><rect x="30" y="0" width="2" height="2" fill="#b9b9b9"/><rect x="31" y="1" width="2" height="2" fill="#fff"/><rect x="33" y="3" width="2" height="2" fill="#b9b9b9"/><rect x="34" y="4" width="2" height="2" fill="#fff"/><rect x="36" y="0" width="2" height="2" fill="#b9b9b9"/><rect x="37" y="1" width="2" height="2" fill="#fff"/><rect x="39" y="3" width="2" height="2" fill="#b9b9b9"/><rect x="40" y="4" width="2" height="2" fill="#fff"/><rect x="42" y="0" width="2" height="2" fill="#b9b9b9"/><rect x="43" y="1" width="2" height="2" fill="#fff"/><rect x="45" y="3" width="2" height="2" fill="#b9b9b9"/><rect x="46" y="4" width="2" height="2" fill="#fff"/><rect x="48" y="0" width="2" height="2" fill="#b9b9b9"/><rect x="49" y="1" width="2" height="2" fill="#fff"/><rect x="51" y="3" width="2" height="2" fill="#b9b9b9"/><rect x="52" y="4" width="2" height="2" fill="#fff"/><rect x="54" y="0" width="2" height="2" fill="#b9b9b9"/><rect x="55" y="1" width="2" height="2" fill="#fff"/><rect x="57" y="3" width="2" height="2" fill="#b9b9b9"/><rect x="58" y="4" width="2" height="2" fill="#fff"/><rect x="60" y="0" width="2" height="2" fill="#b9b9b9"/><rect x="61" y="1" width="2" height="2" fill="#fff"/><rect x="63" y="3" width="2" height="2" fill="#b9b9b9"/><rect x="64" y="4" width="2" height="2" fill="#fff"/><rect x="66" y="0" width="2" height="2" fill="#b9b9b9"/><rect x="67" y="1" width="2" height="2" fill="#fff"/><rect x="69" y="3" width="2" height="2" fill="#b9b9b9"/><rect x="70" y="4" width="2" height="2" fill="#fff"/></svg><svg class="i" style="left:1226px;top:430px;" width="107" height="6" viewBox="0 0 107 6"><rect x="0" y="0" width="2" height="2" fill="#b9b9b9"/><rect x="1" y="1" width="2" height="2" fill="#fff"/><rect x="3" y="3" width="2" height="2" fill="#b9b9b9"/><rect x="4" y="4" width="2" height="2" fill="#fff"/><rect x="6" y="0" width="2" height="2" fill="#b9b9b9"/><rect x="7" y="1" width="2" height="2" fill="#fff"/><rect x="9" y="3" width="2" height="2" fill="#b9b9b9"/><rect x="10" y="4" width="2" height="2" fill="#fff"/><rect x="12" y="0" width="2" height="2" fill="#b9b9b9"/><rect x="13" y="1" width="2" height="2" fill="#fff"/><rect x="15" y="3" width="2" height="2" fill="#b9b9b9"/><rect x="16" y="4" width="2" height="2" fill="#fff"/><rect x="18" y="0" width="2" height="2" fill="#b9b9b9"/><rect x="19" y="1" width="2" height="2" fill="#fff"/><rect x="21" y="3" width="2" height="2" fill="#b9b9b9"/><rect x="22" y="4" width="2" height="2" fill="#fff"/><rect x="24" y="0" width="2" height="2" fill="#b9b9b9"/><rect x="25" y="1" width="2" height="2" fill="#fff"/><rect x="27" y="3" width="2" height="2" fill="#b9b9b9"/><rect x="28" y="4" width="2" height="2" fill="#fff"/><rect x="30" y="0" width="2" height="2" fill="#b9b9b9"/><rect x="31" y="1" width="2" height="2" fill="#fff"/><rect x="33" y="3" width="2" height="2" fill="#b9b9b9"/><rect x="34" y="4" width="2" height="2" fill="#fff"/><rect x="36" y="0" width="2" height="2" fill="#b9b9b9"/><rect x="37" y="1" width="2" height="2" fill="#fff"/><rect x="39" y="3" width="2" height="2" fill="#b9b9b9"/><rect x="40" y="4" width="2" height="2" fill="#fff"/><rect x="42" y="0" width="2" height="2" fill="#b9b9b9"/><rect x="43" y="1" width="2" height="2" fill="#fff"/><rect x="45" y="3" width="2" height="2" fill="#b9b9b9"/><rect x="46" y="4" width="2" height="2" fill="#fff"/><rect x="48" y="0" width="2" height="2" fill="#b9b9b9"/><rect x="49" y="1" width="2" height="2" fill="#fff"/><rect x="51" y="3" width="2" height="2" fill="#b9b9b9"/><rect x="52" y="4" width="2" height="2" fill="#fff"/><rect x="54" y="0" width="2" height="2" fill="#b9b9b9"/><rect x="55" y="1" width="2" height="2" fill="#fff"/><rect x="57" y="3" width="2" height="2" fill="#b9b9b9"/><rect x="58" y="4" width="2" height="2" fill="#fff"/><rect x="60" y="0" width="2" height="2" fill="#b9b9b9"/><rect x="61" y="1" width="2" height="2" fill="#fff"/><rect x="63" y="3" width="2" height="2" fill="#b9b9b9"/><rect x="64" y="4" width="2" height="2" fill="#fff"/><rect x="66" y="0" width="2" height="2" fill="#b9b9b9"/><rect x="67" y="1" width="2" height="2" fill="#fff"/><rect x="69" y="3" width="2" height="2" fill="#b9b9b9"/><rect x="70" y="4" width="2" height="2" fill="#fff"/><rect x="72" y="0" width="2" height="2" fill="#b9b9b9"/><rect x="73" y="1" width="2" height="2" fill="#fff"/><rect x="75" y="3" width="2" height="2" fill="#b9b9b9"/><rect x="76" y="4" width="2" height="2" fill="#fff"/><rect x="78" y="0" width="2" height="2" fill="#b9b9b9"/><rect x="79" y="1" width="2" height="2" fill="#fff"/><rect x="81" y="3" width="2" height="2" fill="#b9b9b9"/><rect x="82" y="4" width="2" height="2" fill="#fff"/><rect x="84" y="0" width="2" height="2" fill="#b9b9b9"/><rect x="85" y="1" width="2" height="2" fill="#fff"/><rect x="87" y="3" width="2" height="2" fill="#b9b9b9"/><rect x="88" y="4" width="2" height="2" fill="#fff"/><rect x="90" y="0" width="2" height="2" fill="#b9b9b9"/><rect x="91" y="1" width="2" height="2" fill="#fff"/><rect x="93" y="3" width="2" height="2" fill="#b9b9b9"/><rect x="94" y="4" width="2" height="2" fill="#fff"/><rect x="96" y="0" width="2" height="2" fill="#b9b9b9"/><rect x="97" y="1" width="2" height="2" fill="#fff"/><rect x="99" y="3" width="2" height="2" fill="#b9b9b9"/><rect x="100" y="4" width="2" height="2" fill="#fff"/><rect x="102" y="0" width="2" height="2" fill="#b9b9b9"/><rect x="103" y="1" width="2" height="2" fill="#fff"/></svg><span class="t" style="left:1163.4px;top:429px;font-size:10px;letter-spacing:-0.39px;">Layers Panel</span><div style="left:1336px;top:426px;width:14px;height:14px;background:#fff;border:1px solid #9a9a9a;border-radius:3px"></div><div style="left:1351px;top:426px;width:14px;height:14px;background:#fff;border:1px solid #9a9a9a;border-radius:3px"></div><svg class="i" style="left:1336px;top:426px;" width="14" height="14" viewBox="0 0 14 14"><path d="M3.5 5.5h5v5h-5z M5.5 5.5v-2h5v5h-2" stroke="#000" fill="none"/><path d="M3 5.5h6M5 3.5h6" stroke="#000" stroke-width="1.6"/></svg><svg class="i" style="left:1351px;top:426px;" width="14" height="14" viewBox="0 0 14 14"><path d="M3.5 3.5l7 7M10.5 3.5l-7 7" stroke="#000" stroke-width="1.5" fill="none"/></svg>
<div style="left:1085px;top:475px;width:281px;height:223px;background:#fff;border:1px solid #a4a4a4;border-width:1px 0 1px 1px"></div>
<div style="left:1086px;top:477px;width:280px;height:16px;background:#f0f0f0"></div>
<div style="left:1093px;top:482px;width:7px;height:7px;background:#7a6a48;border-radius:50%;border:1px solid #555"></div>
<span class="t" style="left:1111.5px;top:481px;font-size:11px;font-weight:bold;letter-spacing:0.29px;text-decoration:underline">crime_subset_SPE</span>
</div>
<div class="statusbar" style="left:0;top:0">
<div style="left:0px;top:699px;width:1366px;height:29px;background:#f0f0f0"></div>
<span class="t" style="left:5.5px;top:708px;font-size:11px;letter-spacing:0.02px;">Toggles the editing state of the current layer</span>
<span class="t" style="left:439.5px;top:709px;font-size:11px;letter-spacing:-0.17px;">Coordinate</span>
<div class="fld" style="left:496px;top:703px;width:131px;height:20px;background:#f6f6f6;border-color:#b4b4b4"></div>
<span class="t" style="left:518.6px;top:709px;font-size:11px;letter-spacing:-0.17px;">1270877,1840903</span>
<span class="t" style="left:660.7px;top:709px;font-size:11px;letter-spacing:-0.49px;">Scale</span>
<div class="fld" style="left:691px;top:703px;width:88px;height:20px;background:#f6f6f6;border-color:#b4b4b4"></div>
<div class="btn" style="left:762px;top:704px;width:16px;height:18px;border-width:0 0 0 1px;border-radius:0 2px 2px 0"></div>
<svg class="i" style="left:767px;top:711px;" width="7" height="4" viewBox="0 0 7 4"><path d="M0 0h7l-3.5 4z" fill="#000"/></svg>
<span class="t" style="left:694.6px;top:709px;font-size:11px;letter-spacing:-0.02px;">1:292,378</span>
<span class="t" style="left:812.7px;top:709px;font-size:11px;letter-spacing:-0.18px;">Magnifier</span>
<div class="fld" style="left:861px;top:701px;width:101px;height:25px;"></div><div class="btn" style="left:945px;top:702px;width:16px;height:11px;border-radius:0 2px 0 0;border-width:0 0 0 1px;border-style:solid;border-color:#c4c4c4"></div><div class="btn" style="left:945px;top:713px;width:16px;height:12px;border-radius:0 0 2px 0;border-width:1px 0 0 1px;border-style:solid;border-color:#c4c4c4"></div><svg class="i" style="left:949px;top:706px;" width="7" height="4" viewBox="0 0 7 4"><path d="M0 4h7l-3.5 -4z" fill="#000"/></svg><svg class="i" style="left:949px;top:717px;" width="7" height="4" viewBox="0 0 7 4"><path d="M0 0h7l-3.5 4z" fill="#000"/></svg><span class="t" style="left:866.1px;top:709px;font-size:11px;letter-spacing:-0.09px;">100%</span>
<span class="t" style="left:969.7px;top:709px;font-size:11px;letter-spacing:0.15px;">Rotation</span>
<div class="fld" style="left:1022px;top:701px;width:96px;height:25px;"></div><div class="btn" style="left:1101px;top:702px;width:16px;height:11px;border-radius:0 2px 0 0;border-width:0 0 0 1px;border-style:solid;border-color:#c4c4c4"></div><div class="btn" style="left:1101px;top:713px;width:16px;height:12px;border-radius:0 0 2px 0;border-width:1px 0 0 1px;border-style:solid;border-color:#c4c4c4"></div><svg class="i" style="left:1105px;top:706px;" width="7" height="4" viewBox="0 0 7 4"><path d="M0 4h7l-3.5 -4z" fill="#000"/></svg><svg class="i" style="left:1105px;top:717px;" width="7" height="4" viewBox="0 0 7 4"><path d="M0 0h7l-3.5 4z" fill="#000"/></svg><span class="t" style="left:1026.5px;top:709px;font-size:11px;letter-spacing:-0.36px;">0.0</span>
<div style="left:1125px;top:706px;width:13px;height:13px;border:1px solid #b4b4b4;background:#fff"></div>
<svg class="i" style="left:1125px;top:706px;" width="13" height="13" viewBox="0 0 13 13"><path d="M3 3l7 7M10 3l-7 7" stroke="#000" stroke-width="2.5" fill="none"/></svg>
<span class="t" style="left:1141.7px;top:709px;font-size:11px;letter-spacing:-0.28px;">Render</span>
<span class="t" style="left:1214.6px;top:709px;font-size:11px;letter-spacing:-0.34px;">USER:100000 (OTF)</span>
</div>
<div class="toolbar-icons" style="left:0;top:0">
<svg width="0" height="0" style="left:0;top:0"><defs>
<linearGradient id="gLens" x1="0" y1="0" x2="0" y2="1"><stop offset="0" stop-color="#fafafa"/><stop offset="1" stop-color="#e2e2e2"/></linearGradient>
<linearGradient id="gBlue" x1="0" y1="0" x2="0" y2="1"><stop offset="0" stop-color="#8fb4de"/><stop offset="1" stop-color="#3f6ea8"/></linearGradient>
<linearGradient id="gGray" x1="0" y1="0" x2="1" y2="0"><stop offset="0" stop-color="#c4c4c4"/><stop offset="0.5" stop-color="#ececec"/><stop offset="1" stop-color="#e0e0e0"/></linearGradient>
<linearGradient id="gBtn" x1="0" y1="0" x2="0" y2="1"><stop offset="0" stop-color="#f6f6f6"/><stop offset="1" stop-color="#d8d8d8"/></linearGradient>
<linearGradient id="gVirt" x1="0" y1="0" x2="1" y2="1"><stop offset="0" stop-color="#d2dff0"/><stop offset="1" stop-color="#8fb0d8"/></linearGradient>
<radialGradient id="gHeat"><stop offset="0" stop-color="#e0582e"/><stop offset="0.45" stop-color="#b0584e" stop-opacity="0.85"/><stop offset="1" stop-color="#6a6a9a" stop-opacity="0"/></radialGradient>
<radialGradient id="gGlobe" cx="0.4" cy="0.35" r="0.7"><stop offset="0" stop-color="#cfe0f3"/><stop offset="1" stop-color="#5e8cc4"/></radialGradient>
<radialGradient id="gInfo" cx="0.35" cy="0.3" r="0.8"><stop offset="0" stop-color="#8db3e0"/><stop offset="1" stop-color="#4f7fbb"/></radialGradient>
</defs></svg>
<svg class="i" style="left:3px;top:3px;" width="16" height="17" viewBox="0 0 16 17"><text x="6.9" y="12.2" font-size="15.5" font-weight="bold" text-anchor="middle" fill="#e4ec6c" stroke="#c2d040" stroke-width="0.5" font-family="Liberation Serif,serif">Q</text><path d="M2.5 12l7 -8" stroke="#1f8a1f" stroke-width="1.4"/><path d="M12.8 0.3l-1.3 4.800l-3.4 -2.900zM0.6 13.200l3.2 -1.600l-1 2.900z" fill="#176f17"/></svg>
<div style="left:236px;top:49px;width:34px;height:33px;border:1px solid #8c8c8c;border-radius:3px;background:linear-gradient(#dcdcdc,#d2d2d2 60%,#dedede)"></div>
<svg class="i" style="left:17px;top:53px;" width="24" height="24" viewBox="0 0 24 24"><path d="M4.5 2.5q0 -1 1 -1h9l5 5v15q0 1 -1 1h-13q-1 0 -1 -1z" fill="#fff" stroke="#6e6e6e"/><path d="M14.5 1.5v4q0 1 1 1h4" fill="none" stroke="#6e6e6e"/></svg>
<svg class="i" style="left:52px;top:53px;" width="24" height="24" viewBox="0 0 24 24"><path d="M1.5 4.5q0 -1 1 -1h5l1 2h10.5v3h-17.5z" fill="#f6cf45" stroke="#d1a90f"/><path d="M1.5 20.5l2.6 -12h19l-3 12z" fill="#fdd84e" stroke="#d1a90f" stroke-linejoin="round"/></svg>
<svg class="i" style="left:87px;top:53px;" width="24" height="24" viewBox="0 0 24 24"><rect x="2.5" y="0.5" width="19" height="20.5" rx="2" fill="#6a96c9" stroke="#4d78ad"/><rect x="5.5" y="1.5" width="13" height="8" fill="#f0efee" stroke="#c8c8c8" stroke-width="0.6"/><path d="M7 3.5h10M7 5.5h10M7 7.5h10" stroke="#707070" stroke-width="0.9"/><rect x="6.3" y="13.8" width="11.5" height="6.4" fill="#eeeeee" stroke="#d0d0d0" stroke-width="0.5"/><rect x="8" y="15" width="2.6" height="4.2" fill="#3b5f8e"/></svg>
<svg class="i" style="left:122px;top:53px;" width="24" height="24" viewBox="0 0 24 24"><rect x="2.5" y="0.5" width="19" height="20.5" rx="2" fill="#6a96c9" stroke="#4d78ad"/><rect x="5.5" y="1.5" width="13" height="8" fill="#f0efee" stroke="#c8c8c8" stroke-width="0.6"/><path d="M7 3.5h10M7 5.5h10M7 7.5h10" stroke="#707070" stroke-width="0.9"/><rect x="6.3" y="13.8" width="11.5" height="6.4" fill="#eeeeee" stroke="#d0d0d0" stroke-width="0.5"/><rect x="8" y="15" width="2.6" height="4.2" fill="#3b5f8e"/><rect x="14.5" y="14.5" width="9.5" height="9.5" rx="2" fill="#5a9a58" stroke="#dfeadf" stroke-width="0.7"/><path d="M16.7 21.8l5 -5" stroke="#fff" stroke-width="2.2" stroke-linecap="round"/></svg>
<svg class="i" style="left:157px;top:53px;" width="24" height="24" viewBox="0 0 24 24"><path d="M0.5 1.5q0 -1 1 -1h15.5l4.5 4.5v9.5q0 1 -1 1h-19q-1 0 -1 -1z" fill="#fff" stroke="#6e6e6e"/><path d="M17 0.5v3.5q0 1 1 1h3.5" fill="none" stroke="#6e6e6e"/><rect x="13.2" y="13" width="10.8" height="10.8" rx="1.6" fill="#cba20c"/><path d="M14.1 18.4L23.1 18.4M15.4 15.2L21.8 21.6M18.6 13.9L18.6 22.9M21.8 15.2L15.4 21.6" stroke="#fff" stroke-width="1.3"/><circle cx="18.6" cy="18.4" r="1.2" fill="#cba20c"/></svg>
<svg class="i" style="left:192px;top:53px;" width="24" height="24" viewBox="0 0 24 24"><path d="M0.5 1.5q0 -1 1 -1h15.5l4.5 4.5v9.5q0 1 -1 1h-19q-1 0 -1 -1z" fill="#fff" stroke="#6e6e6e"/><path d="M17 0.5v3.5q0 1 1 1h3.5" fill="none" stroke="#6e6e6e"/><path d="M14.5 14.5l7.5 8.5" stroke="#8a7a3a" stroke-width="4.2" stroke-linecap="round"/><path d="M14.8 14.8l7 8" stroke="#f1d26a" stroke-width="2.6" stroke-linecap="round"/><path d="M13.6 13.4l1.8 2" stroke="#222" stroke-width="4"/><path d="M12.5 6a4 4 0 1 0 3.8 5.6l-3 .6l-1.8 -2.2l1.4 -2.8z" fill="#eee" stroke="#8a8a8a" stroke-width="0.9" transform="rotate(-18 11 10)"/></svg>
<svg class="i" style="left:241px;top:53px;" width="24" height="24" viewBox="0 0 24 24"><path d="M9 22v-2.5l-4.5 -5q-1.2 -1.6 .4 -2.4q1 -.3 2.2 1l1.9 1.400v-8q0 -1.5 1.4 -1.500q1.4 0 1.4 1.500v4.500l4.3 1.300q1.6 .6 1.6 2.500v7.200z" fill="#fff" stroke="#8a8a8a" stroke-width="0.8" transform="translate(2.5 0)"/><path d="M14.5 3l-3.5 6.500M8 12l-3.5 5" stroke="#8a8a8a" stroke-width="0.8"/><circle cx="12.3" cy="7" r="1.5" fill="#ddd" stroke="#8a8a8a" stroke-width="0.7"/><circle cx="6.6" cy="14" r="1.5" fill="#ddd" stroke="#8a8a8a" stroke-width="0.7"/></svg>
<svg class="i" style="left:276px;top:53px;" width="24" height="24" viewBox="0 0 24 24"><path d="M8.5 22.500l-5.5 -8.500q-1.4 -2.4 .3 -3q1.3 -.3 2.4 1.200l1.6 2.300v-9.500q0 -1.5 1.2 -1.500q1.3 0 1.3 1.500v-1.300q0 -1.5 1.3 -1.500q1.3 0 1.3 1.500v1.200q0 -1.3 1.3 -1.300q1.3 0 1.3 1.400v1.600q0 -1.2 1.2 -1.200q1.3 0 1.3 1.400v9q0 3.5 -2.3 6.700z" fill="#fff" stroke="#1a1a1a" stroke-width="1.2" stroke-linejoin="round" transform="translate(1.5 -1.3) scale(1 1.06)"/><path d="M11.7 5v6.500M14.3 5v6.500M16.9 6.500v5.5" stroke="#1a1a1a" stroke-width="1" /></svg>
<svg class="i" style="left:311px;top:53px;" width="24" height="24" viewBox="0 0 24 24"><rect x="2.5" y="3.5" width="13" height="13" fill="#fde44f" stroke="#d9b114"/><g transform="translate(12.5 12) rotate(0)"><path d="M0 -11l-4.6 5h2.700v3h3.800v-3h2.700z" fill="#5b8cc4" stroke="#4a78ae" stroke-width="0.5"/></g><g transform="translate(12.5 12) rotate(90)"><path d="M0 -11l-4.6 5h2.700v3h3.800v-3h2.700z" fill="#5b8cc4" stroke="#4a78ae" stroke-width="0.5"/></g><g transform="translate(12.5 12) rotate(180)"><path d="M0 -11l-4.6 5h2.700v3h3.800v-3h2.700z" fill="#5b8cc4" stroke="#4a78ae" stroke-width="0.5"/></g><g transform="translate(12.5 12) rotate(270)"><path d="M0 -11l-4.6 5h2.700v3h3.800v-3h2.700z" fill="#5b8cc4" stroke="#4a78ae" stroke-width="0.5"/></g></svg>
<svg class="i" style="left:346px;top:53px;" width="24" height="24" viewBox="0 0 24 24"><circle cx="14.5" cy="9.4" r="8" fill="url(#gLens)" stroke="#7d7d7d" stroke-width="1"/><path d="M9 9.400h11M14.5 3.900v11" stroke="#5b8cc4" stroke-width="2.4"/><path d="M8.9 15.0L1.6 22.6" stroke="#7a5a00" stroke-width="3.6" stroke-linecap="butt"/><path d="M8.0 15.9L2.2 22.0" stroke="#f7c31c" stroke-width="2.2"/><path d="M9.5 14.4L7.3 16.6" stroke="#111" stroke-width="3.8"/></svg>
<svg class="i" style="left:381px;top:53px;" width="24" height="24" viewBox="0 0 24 24"><circle cx="14.5" cy="9.4" r="8" fill="url(#gLens)" stroke="#7d7d7d" stroke-width="1"/><path d="M9 9.400h11" stroke="#5b8cc4" stroke-width="2.4"/><path d="M8.9 15.0L1.6 22.6" stroke="#7a5a00" stroke-width="3.6" stroke-linecap="butt"/><path d="M8.0 15.9L2.2 22.0" stroke="#f7c31c" stroke-width="2.2"/><path d="M9.5 14.4L7.3 16.6" stroke="#111" stroke-width="3.8"/></svg>
<svg class="i" style="left:416px;top:53px;" width="24" height="24" viewBox="0 0 24 24"><circle cx="14.5" cy="9.4" r="8" fill="url(#gLens)" stroke="#a6a6a6" stroke-width="1"/><text x="14.5" y="13" font-size="9.5" font-weight="bold" text-anchor="middle" fill="#8a8a8a" font-family="Liberation Sans,sans-serif" letter-spacing="-0.5">1:1</text><path d="M8.9 15.0L1.6 22.6" stroke="#9a9a9a" stroke-width="3.6" stroke-linecap="butt"/><path d="M8.0 15.9L2.2 22.0" stroke="#e4e4e4" stroke-width="2.2"/><path d="M9.5 14.4L7.3 16.6" stroke="#8a8a8a" stroke-width="3.8"/></svg>
<svg class="i" style="left:451px;top:53px;" width="24" height="24" viewBox="0 0 24 24"><circle cx="14" cy="9.5" r="7.5" fill="url(#gLens)" stroke="#7d7d7d" stroke-width="1"/><path transform="translate(14 9.5) rotate(0)" d="M10 -10v7l-2.4 -2.300l-2.6 2.600l-2.4 -2.400l2.6 -2.600l-2.2 -2.300z" fill="#5b8cc4" stroke="#4a78ae" stroke-width="0.4"/><path transform="translate(14 9.5) rotate(-90)" d="M10 -10v7l-2.4 -2.300l-2.6 2.600l-2.4 -2.400l2.6 -2.600l-2.2 -2.300z" fill="#5b8cc4" stroke="#4a78ae" stroke-width="0.4"/><path transform="translate(14 9.5) rotate(90)" d="M10 -10v7l-2.4 -2.300l-2.6 2.600l-2.4 -2.400l2.6 -2.600l-2.2 -2.300z" fill="#5b8cc4" stroke="#4a78ae" stroke-width="0.4"/><path d="M8.8 14.7L1.6 22.6" stroke="#7a5a00" stroke-width="3.6" stroke-linecap="butt"/><path d="M7.9 15.6L2.2 22.0" stroke="#f7c31c" stroke-width="2.2"/><path d="M9.4 14.1L7.2 16.3" stroke="#111" stroke-width="3.8"/></svg>
<svg class="i" style="left:486px;top:53px;" width="24" height="24" viewBox="0 0 24 24"><rect x="2.5" y="2.5" width="9" height="13" fill="#fde44f" stroke="#d9b114"/><circle cx="15" cy="8.5" r="8.5" fill="url(#gLens)" stroke="#7d7d7d" stroke-width="1"/><path d="M15 0.500a8 8 0 0 0 0 16z" fill="#e9e1b0" opacity="0.75"/><path d="M9.1 14.4L1.6 22.6" stroke="#7a5a00" stroke-width="3.6" stroke-linecap="butt"/><path d="M8.2 15.3L2.2 22.0" stroke="#f7c31c" stroke-width="2.2"/><path d="M9.7 13.8L7.5 16.0" stroke="#111" stroke-width="3.8"/></svg>
<svg class="i" style="left:521px;top:53px;" width="24" height="24" viewBox="0 0 24 24"><rect x="2.5" y="2.5" width="9" height="13" fill="#f4f4f4" stroke="#8a8a8a"/><circle cx="15" cy="8.5" r="8.5" fill="url(#gLens)" stroke="#7d7d7d" stroke-width="1"/><path d="M15 1v15" stroke="#cfcfcf" stroke-width="0.8"/><path d="M9.1 14.4L1.6 22.6" stroke="#7a5a00" stroke-width="3.6" stroke-linecap="butt"/><path d="M8.2 15.3L2.2 22.0" stroke="#f7c31c" stroke-width="2.2"/><path d="M9.7 13.8L7.5 16.0" stroke="#111" stroke-width="3.8"/></svg>
<svg class="i" style="left:556px;top:53px;" width="24" height="24" viewBox="0 0 24 24"><circle cx="14.5" cy="9" r="8" fill="url(#gLens)" stroke="#7d7d7d" stroke-width="1"/><path d="M8.9 14.6L1.6 22.6" stroke="#7a5a00" stroke-width="3.6" stroke-linecap="butt"/><path d="M8.0 15.5L2.2 22.0" stroke="#f7c31c" stroke-width="2.2"/><path d="M9.5 14.0L7.3 16.2" stroke="#111" stroke-width="3.8"/><rect x="13.5" y="13.5" width="10.5" height="10.5" fill="#5b8cc4" stroke="#4a78ae" stroke-width="0.6"/><path d="M21.5 15.500l-5.5 3.200l5.5 3.2" stroke="#fff" stroke-width="1.8" fill="none"/></svg>
<svg class="i" style="left:591px;top:53px;" width="24" height="24" viewBox="0 0 24 24"><circle cx="14.5" cy="9" r="8" fill="url(#gLens)" stroke="#a6a6a6" stroke-width="1"/><path d="M8.9 14.6L1.6 22.6" stroke="#9a9a9a" stroke-width="3.6" stroke-linecap="butt"/><path d="M8.0 15.5L2.2 22.0" stroke="#e4e4e4" stroke-width="2.2"/><path d="M9.5 14.0L7.3 16.2" stroke="#8a8a8a" stroke-width="3.8"/><rect x="13.5" y="13.5" width="10.5" height="10.5" fill="#b4b4b4" stroke="#a4a4a4" stroke-width="0.6"/><path d="M16 15.500l5.5 3.200l-5.5 3.2" stroke="#fff" stroke-width="1.8" fill="none"/></svg>
<svg class="i" style="left:626px;top:53px;" width="24" height="24" viewBox="0 0 24 24"><path d="M2.5 2q0 -1 2 -1q1.8 0 1.8 1v15" fill="#fafafa" stroke="#9a9a9a"/><path d="M6.3 2.500h15.200v19h-16.500q-2.5 0 -2.5 -2.500v-17" fill="url(#gGray)" stroke="#9a9a9a"/><path d="M2.5 2q0 -1.2 1.9 -1.200t1.9 1.200v15.500h-3.800z" fill="#fbfbfb" stroke="#9a9a9a"/><path d="M13.5 1.500h4v7.500l-2 2l-2 -2z" fill="#6a96c9" stroke="#2f5788"/><path d="M15 2.500v6" stroke="#a9c6e8" stroke-width="1"/><rect x="13" y="13" width="11" height="11" rx="1.6" fill="#cba20c"/><path d="M13.9 18.5L23.1 18.5M15.2 15.2L21.8 21.8M18.5 13.9L18.5 23.1M21.8 15.2L15.2 21.8" stroke="#fff" stroke-width="1.3"/><circle cx="18.5" cy="18.5" r="1.2" fill="#cba20c"/></svg>
<svg class="i" style="left:661px;top:53px;" width="24" height="24" viewBox="0 0 24 24"><path d="M2.5 2q0 -1 2 -1q1.8 0 1.8 1v15" fill="#fafafa" stroke="#9a9a9a"/><path d="M6.3 2.500h15.200v19h-16.500q-2.5 0 -2.5 -2.500v-17" fill="url(#gGray)" stroke="#9a9a9a"/><path d="M2.5 2q0 -1.2 1.9 -1.200t1.9 1.200v15.500h-3.800z" fill="#fbfbfb" stroke="#9a9a9a"/><path d="M13.5 1.500h4v7.500l-2 2l-2 -2z" fill="#6a96c9" stroke="#2f5788"/><path d="M15 2.500v6" stroke="#a9c6e8" stroke-width="1"/></svg>
<svg class="i" style="left:696px;top:53px;" width="24" height="24" viewBox="0 0 24 24"><path d="M2.5 10.500a9.5 8.5 0 0 1 16.5 -5l2.5 -2.500v9h-9l3 -3a5.5 5 0 0 0 -9 1.500z" fill="url(#gBlue)" stroke="#5b8cc4" stroke-width="0.6"/><path d="M21.5 13.500a9.5 8.5 0 0 1 -16.5 5l-2.5 2.500v-9h9l-3 3a5.5 5 0 0 0 9 -1.500z" fill="url(#gBlue)" stroke="#5b8cc4" stroke-width="0.6"/></svg>
<svg class="i" style="left:745px;top:53px;" width="24" height="24" viewBox="0 0 24 24"><circle cx="9" cy="9" r="8.3" fill="url(#gInfo)" stroke="#5b8cc4" stroke-width="0.6"/><text x="8.8" y="14" font-size="15" font-weight="bold" font-style="italic" text-anchor="middle" fill="#fff" font-family="Liberation Serif,serif">i</text><path transform="translate(11.5 10.5) scale(0.95) rotate(-22)" d="M0 0v13l3 -3l2.4 5l2 -1l-2.4 -5h4.4z" fill="#fff" stroke="#4a4a4a" stroke-width="1" stroke-linejoin="round"/></svg>
<svg class="i" style="left:780px;top:53px;" width="24" height="24" viewBox="0 0 24 24"><path d="M19.4 8.8L19.4 11.2L17.5 12.0L16.7 13.9L17.5 15.8L15.8 17.5L13.9 16.7L12.0 17.5L11.2 19.4L8.8 19.4L8.0 17.5L6.1 16.7L4.2 17.5L2.5 15.8L3.3 13.9L2.5 12.0L0.6 11.2L0.6 8.8L2.5 8.0L3.3 6.1L2.5 4.2L4.2 2.5L6.1 3.3L8.0 2.5L8.8 0.6L11.2 0.6L12.0 2.5L13.9 3.3L15.8 2.5L17.5 4.2L16.7 6.1L17.5 8.0z" fill="#ededed" stroke="#b4b4b4" stroke-width="0.8" stroke-linejoin="round"/><circle cx="10" cy="10" r="5.8" fill="#b9b9b9" stroke="#a2a2a2"/><path d="M8.3 7.300l4.8 2.700l-4.8 2.700z" fill="#fff"/><path transform="translate(13.5 12.5) scale(0.9) rotate(-22)" d="M0 0v13l3 -3l2.4 5l2 -1l-2.4 -5h4.400z" fill="#fff" stroke="#b0b0b0" stroke-width="1" stroke-linejoin="round"/></svg>
<svg class="i" style="left:827px;top:53px;" width="24" height="24" viewBox="0 0 24 24"><rect x="1.5" y="1.5" width="21" height="19" fill="#e4e4e4" stroke="#1a1a1a" stroke-dasharray="2 1.5"/><rect x="2.5" y="2.5" width="13" height="13" fill="#fde44f" stroke="#d9b114"/><path transform="translate(10.5 8.5) scale(1.05) rotate(-22)" d="M0 0v13l3 -3l2.4 5l2 -1l-2.4 -5h4.4z" fill="#fff" stroke="#4a4a4a" stroke-width="1" stroke-linejoin="round"/></svg>
<svg class="i" style="left:874px;top:53px;" width="24" height="24" viewBox="0 0 24 24"><rect x="8.5" y="8.5" width="13" height="13" fill="#fde44f" stroke="#d9b114"/><text x="2" y="15.8" font-size="31" fill="#5b2a6e" stroke="#5b2a6e" stroke-width="0.3" font-family="Liberation Serif,serif">ε</text></svg>
<svg class="i" style="left:921px;top:53px;" width="24" height="24" viewBox="0 0 24 24"><rect x="2.5" y="2.5" width="13" height="13" fill="#fde44f" stroke="#d9b114"/><rect x="13.5" y="13.5" width="10.5" height="10.5" rx="2" fill="#d81f26" stroke="#f4d0d0" stroke-width="0.5"/><circle cx="18.75" cy="18.75" r="3.4" fill="#fff"/><path d="M16.5 21l4.5 -4.5" stroke="#d81f26" stroke-width="2.2"/><circle cx="18.75" cy="18.75" r="3.4" fill="none" stroke="#f0a0a0" stroke-width="0.8"/></svg>
<svg class="i" style="left:956px;top:53px;" width="24" height="24" viewBox="0 0 24 24"><rect x="2.5" y="2.5" width="19" height="19" rx="1" fill="#f3f1ef" stroke="#6a96c9"/><rect x="3" y="3" width="18" height="5" fill="#c5daf1"/><path d="M2.5 8h19" stroke="#6a96c9"/><path d="M5 5.500h4M11 5.500h8" stroke="#5b8cc4" stroke-width="1.6"/><path d="M5 10.500h4M11 10.500h8M5 13.500h4M11 13.500h8M5 16.500h4M11 16.500h8M5 19h4M11 19h8" stroke="#6a96c9" stroke-width="1"/></svg>
<svg class="i" style="left:991px;top:53px;" width="24" height="24" viewBox="0 0 24 24"><path d="M3.5 2v19M20.5 2v19" stroke="#5a5a5a" stroke-width="1"/><path d="M3.5 5h17M3.5 11h17M3.5 17h17" stroke="#5a5a5a" stroke-width="0.9"/><rect x="1.5" y="20.5" width="21" height="2" fill="#c8c8c8" stroke="#7a7a7a" stroke-width="0.8"/><rect x="7.2" y="3.2" width="3.6" height="3.6" rx="1" transform="rotate(45 9 5)" fill="#f3b0b0" stroke="#d23a3a" stroke-width="0.9"/><rect x="15.2" y="3.2" width="3.6" height="3.6" rx="1" transform="rotate(45 17 5)" fill="#f3b0b0" stroke="#d23a3a" stroke-width="0.9"/><rect x="5.2" y="9.2" width="3.6" height="3.6" rx="1" transform="rotate(45 7 11)" fill="#c1e6bd" stroke="#5bb050" stroke-width="0.9"/><rect x="10.7" y="9.2" width="3.6" height="3.6" rx="1" transform="rotate(45 12.5 11)" fill="#c1e6bd" stroke="#5bb050" stroke-width="0.9"/><rect x="5.2" y="15.2" width="3.6" height="3.6" rx="1" transform="rotate(45 7 17)" fill="#bcd5f0" stroke="#5b8cc4" stroke-width="0.9"/><rect x="10.7" y="15.2" width="3.6" height="3.6" rx="1" transform="rotate(45 12.5 17)" fill="#bcd5f0" stroke="#5b8cc4" stroke-width="0.9"/><rect x="16.2" y="15.2" width="3.6" height="3.6" rx="1" transform="rotate(45 18 17)" fill="#bcd5f0" stroke="#5b8cc4" stroke-width="0.9"/></svg>
<svg class="i" style="left:1026px;top:53px;" width="24" height="24" viewBox="0 0 24 24"><text x="12.5" y="21.5" font-size="27" font-weight="bold" text-anchor="middle" fill="#a0089a" font-family="Liberation Serif,serif">Σ</text></svg>
<svg class="i" style="left:1061px;top:53px;" width="24" height="24" viewBox="0 0 24 24"><path d="M1.5 6.500h20M1.5 4v5M21.5 4v5" stroke="#3a5f8c" stroke-width="1.4" fill="none"/><rect x="0.5" y="12.5" width="22" height="7" rx="1" fill="#c9c9c9" stroke="#6e6e6e"/><path d="M3.5 13v3M6.5 13v3M9.5 13v4.500M12.5 13v3M15.5 13v3M18.5 13v3" stroke="#6e6e6e" stroke-width="1.1"/></svg>
<svg class="i" style="left:1108px;top:53px;" width="24" height="24" viewBox="0 0 24 24"><circle cx="5.5" cy="19.5" r="3.7" fill="#7fb27c" stroke="#6a8f68" stroke-width="0.9"/><path d="M5.5 1.500h13q4 0 4 4v4q0 4 -4 4h-6l-6.5 6l2.5 -6h-3q-4 0 -4 -4v-4q0 -4 4 -4z" fill="#fdee98" stroke="#d9b114" stroke-width="1.1" stroke-linejoin="round"/></svg>
<svg class="i" style="left:1143px;top:53px;" width="24" height="24" viewBox="0 0 24 24"><path d="M1.5 1.500h21v15h-13l-8 6l3 -6h-3z" fill="#e8f0f5" stroke="#9a9a9a" stroke-linejoin="round"/><text x="12" y="14.5" font-size="15" text-anchor="middle" fill="#4a4a4a" font-family="Liberation Serif,serif" font-weight="bold">T</text></svg>
<svg class="i" style="left:1204px;top:53px;" width="24" height="24" viewBox="0 0 24 24"><rect x="2" y="1.5" width="20" height="20.5" rx="1" fill="#2b3d52" stroke="#1f2c3c" stroke-width="0.8"/><rect x="7" y="2" width="14.5" height="19.5" fill="#6a96c9"/><text x="14.3" y="17" font-size="15" text-anchor="middle" fill="#fff" font-family="Liberation Serif,serif">?</text></svg>
<svg class="i" style="left:810px;top:63px;" width="9" height="5" viewBox="0 0 9 5"><path d="M0 0h9l-4.500 5z" fill="#9a9a9a"/></svg>
<svg class="i" style="left:857px;top:63px;" width="9" height="5" viewBox="0 0 9 5"><path d="M0 0h9l-4.500 5z" fill="#000"/></svg>
<svg class="i" style="left:904px;top:63px;" width="9" height="5" viewBox="0 0 9 5"><path d="M0 0h9l-4.500 5z" fill="#000"/></svg>
<svg class="i" style="left:1091px;top:63px;" width="9" height="5" viewBox="0 0 9 5"><path d="M0 0h9l-4.500 5z" fill="#000"/></svg>
<svg class="i" style="left:1173px;top:63px;" width="9" height="5" viewBox="0 0 9 5"><path d="M0 0h9l-4.500 5z" fill="#000"/></svg>
<svg class="i" style="left:17px;top:92px;" width="24" height="24" viewBox="0 0 24 24"><g transform="translate(2.5 22.5) rotate(-65.7)"><path d="M0 0L5.5 -3.0L5.5 3.0z" fill="#dcdcdc" stroke="#a4a4a4" stroke-width="0.6"/><path d="M0 0L2.2 -1.2L2.2 1.2z" fill="#9a9a9a"/><rect x="5.5" y="-3.0" width="15.5" height="6" fill="#bdbdbd" stroke="#a4a4a4" stroke-width="0.6"/><rect x="5.5" y="-0.75" width="15.5" height="1.65" fill="#cfcfcf"/><rect x="21.0" y="-3.0" width="2" height="6" fill="#ececec" stroke="#a4a4a4" stroke-width="0.5"/></g><g transform="translate(7.5 23.5) rotate(-62.4)"><path d="M0 0L5.5 -3.2L5.5 3.2z" fill="#dcdcdc" stroke="#a4a4a4" stroke-width="0.6"/><path d="M0 0L2.2 -1.3L2.2 1.3z" fill="#9a9a9a"/><rect x="5.5" y="-3.2" width="16.2" height="6.4" fill="#bdbdbd" stroke="#a4a4a4" stroke-width="0.6"/><rect x="5.5" y="-0.80" width="16.2" height="1.76" fill="#cfcfcf"/><rect x="21.7" y="-3.2" width="2" height="6.4" fill="#ececec" stroke="#a4a4a4" stroke-width="0.5"/></g><path d="M20.5 22h6l-3 3.3z" fill="#8e8e8e"/></svg>
<svg class="i" style="left:52px;top:92px;" width="24" height="24" viewBox="0 0 24 24"><g transform="translate(5.5 23.5) rotate(-61.4)"><path d="M0 0L5.5 -3.3L5.5 3.3z" fill="#e4e4e4" stroke="#8a7a10" stroke-width="0.6"/><path d="M0 0L2.2 -1.3L2.2 1.3z" fill="#3a3a3a"/><rect x="5.5" y="-3.3" width="17.6" height="6.6" fill="#e3c81d" stroke="#8a7a10" stroke-width="0.6"/><rect x="5.5" y="-0.82" width="17.6" height="1.81" fill="#fbee7c"/><rect x="23.1" y="-3.3" width="2" height="6.6" fill="#f6f6f6" stroke="#8a7a10" stroke-width="0.5"/></g></svg>
<svg class="i" style="left:87px;top:92px;" width="24" height="24" viewBox="0 0 24 24"><rect x="1.5" y="1.5" width="19" height="19" rx="2" fill="#b4b4b4" stroke="#9c9c9c"/><rect x="5.5" y="1.5" width="13" height="8" fill="#f0efee" stroke="#c8c8c8" stroke-width="0.6"/><path d="M7 3.5h10M7 5.5h10M7 7.5h10" stroke="#707070" stroke-width="0.9"/><rect x="6.3" y="13.8" width="11.5" height="6.4" fill="#eeeeee" stroke="#d0d0d0" stroke-width="0.5"/><rect x="8" y="15" width="2.6" height="4.2" fill="#a0a0a0"/><g transform="translate(13.5 23.5) rotate(-60.3)"><path d="M0 0L5.5 -1.8L5.5 1.8z" fill="#dcdcdc" stroke="#a4a4a4" stroke-width="0.6"/><path d="M0 0L2.2 -0.7L2.2 0.7z" fill="#9a9a9a"/><rect x="5.5" y="-1.8" width="8.6" height="3.6" fill="#bdbdbd" stroke="#a4a4a4" stroke-width="0.6"/><rect x="5.5" y="-0.45" width="8.6" height="0.99" fill="#cfcfcf"/><rect x="14.1" y="-1.8" width="2" height="3.6" fill="#ececec" stroke="#a4a4a4" stroke-width="0.5"/></g></svg>
<svg class="i" style="left:122px;top:92px;" width="24" height="24" viewBox="0 0 24 24"><circle cx="10.9" cy="4" r="2.9" fill="#c2c2c2" stroke="#a8a8a8" stroke-width="0.8"/><circle cx="19.9" cy="5.8" r="2.9" fill="#c2c2c2" stroke="#a8a8a8" stroke-width="0.8"/><circle cx="3.9" cy="12" r="2.9" fill="#c2c2c2" stroke="#a8a8a8" stroke-width="0.8"/><rect x="13.3" y="13.3" width="10.5" height="10.5" rx="1.8" fill="#b9b9b9"/><path d="M14.1 18.6L23.0 18.6M15.4 15.4L21.7 21.7M18.6 14.1L18.6 23.0M21.7 15.4L15.4 21.7" stroke="#f4f4f4" stroke-width="1.1"/><circle cx="18.55" cy="18.55" r="1.1" fill="#b9b9b9"/></svg>
<svg class="i" style="left:157px;top:92px;" width="24" height="24" viewBox="0 0 24 24"><path d="M4.5 19.5q0 -14 14 -15.5" fill="none" stroke="#b9b9b9" stroke-width="1.6"/><rect x="17" y="2.2" width="3.6" height="3.6" fill="#e6e6e6" stroke="#a8a8a8" stroke-width="0.9"/><rect x="5.2" y="6.2" width="3.6" height="3.6" fill="#e6e6e6" stroke="#a8a8a8" stroke-width="0.9"/><rect x="2.2" y="18.1" width="3.6" height="3.6" fill="#e6e6e6" stroke="#a8a8a8" stroke-width="0.9"/><rect x="13.3" y="13.3" width="10.5" height="10.5" rx="1.8" fill="#b9b9b9"/><path d="M14.1 18.6L23.0 18.6M15.4 15.4L21.7 21.7M18.6 14.1L18.6 23.0M21.7 15.4L15.4 21.7" stroke="#f4f4f4" stroke-width="1.1"/><circle cx="18.55" cy="18.55" r="1.1" fill="#b9b9b9"/></svg>
<svg class="i" style="left:204px;top:92px;" width="24" height="24" viewBox="0 0 24 24"><circle cx="10.9" cy="4" r="2.9" fill="#c2c2c2" stroke="#a8a8a8" stroke-width="0.8"/><circle cx="19.9" cy="5.8" r="2.9" fill="#c2c2c2" stroke="#a8a8a8" stroke-width="0.8"/><circle cx="3.9" cy="12" r="2.9" fill="#c2c2c2" stroke="#a8a8a8" stroke-width="0.8"/><rect x="13.3" y="13.3" width="10.5" height="10.5" rx="1.8" fill="#7e7e7e"/><path d="M14.8 17.05h4v-2.5l4 4l-4 4v-2.5h-4z" fill="#fff"/></svg>
<svg class="i" style="left:239px;top:92px;" width="24" height="24" viewBox="0 0 24 24"><path d="M8 6h12.5" stroke="#b4b4b4" stroke-width="1.5"/><path d="M7 8.500l-4.5 13.5" stroke="#6a6a6a" stroke-width="0.9"/><rect x="5.5" y="3.5" width="5" height="5" fill="#f4f4f4" stroke="#6a6a6a"/><circle cx="8" cy="6" r="1.3" fill="none" stroke="#6a6a6a" stroke-width="0.8"/><path d="M11 21l9.5 -10" stroke="#bdbdbd" stroke-width="2.6" stroke-linecap="round"/><path d="M12 10.500l4 -1.500l6 8" stroke="#a2a2a2" stroke-width="2.6" fill="none"/><path d="M17 15l5 6" stroke="#a2a2a2" stroke-width="2.2"/></svg>
<svg class="i" style="left:274px;top:92px;" width="24" height="24" viewBox="0 0 24 24"><path d="M9.5 3.500q0 -1.7 2.5 -1.700t2.5 1.7" fill="none" stroke="#8c8c8c" stroke-width="1.2"/><path d="M4 4.900h16" stroke="#7e7e7e" stroke-width="2.2"/><path d="M5.5 7.500h13l-1 15h-11z" fill="#e8e8e8" stroke="#7e7e7e" stroke-width="1.4" stroke-linejoin="round"/><path d="M9 9.500v11M12 9.500v11M15 9.500v11" stroke="#9a9a9a" stroke-width="1.5"/></svg>
<svg class="i" style="left:309px;top:92px;" width="24" height="24" viewBox="0 0 24 24"><path d="M2 4.500l14 9.5" stroke="#b0b0b0" stroke-width="1.3"/><path d="M1 11.500q8 -1.5 14.5 -.5" stroke="#c4c4c4" stroke-width="2.2" fill="none"/><ellipse cx="19" cy="8.5" rx="3.6" ry="2.3" transform="rotate(-35 19 8.5)" fill="none" stroke="#8e8e8e" stroke-width="1.8"/><ellipse cx="19.5" cy="17" rx="3.6" ry="2.3" transform="rotate(50 19.5 17)" fill="none" stroke="#8e8e8e" stroke-width="1.8"/><path d="M14.5 12l2 -2M15 13l2.5 2" stroke="#8e8e8e" stroke-width="1.6"/></svg>
<svg class="i" style="left:344px;top:92px;" width="24" height="24" viewBox="0 0 24 24"><path d="M9.5 2.5h7l3 3v11.5h-10z" fill="#f8f8f8" stroke="#c4c4c4" stroke-width="1" stroke-linejoin="round"/><path d="M16.5 2.5v3h3" fill="none" stroke="#c4c4c4" stroke-width="0.9"/><path d="M4.5 6.5h7.5l3 3v12h-10.5z" fill="#f8f8f8" stroke="#8e8e8e" stroke-width="1" stroke-linejoin="round"/><path d="M12.0 6.5v3h3" fill="none" stroke="#8e8e8e" stroke-width="0.9"/><path d="M6.5 12.0h6.5" stroke="#a8a8a8" stroke-width="0.9"/><path d="M6.5 14.3h6.5" stroke="#a8a8a8" stroke-width="0.9"/><path d="M6.5 16.6h6.5" stroke="#a8a8a8" stroke-width="0.9"/><path d="M6.5 18.900000000000002h6.5" stroke="#a8a8a8" stroke-width="0.9"/></svg>
<svg class="i" style="left:379px;top:92px;" width="24" height="24" viewBox="0 0 24 24"><rect x="4.5" y="3" width="15" height="19" rx="1" fill="#e4e4e4" stroke="#a8a8a8" stroke-width="1.1"/><rect x="8" y="1.5" width="8" height="3.5" rx="0.8" fill="#d0d0d0" stroke="#b4b4b4" stroke-width="0.7"/><path d="M7 5.5h7l3 3v11h-10z" fill="#f8f8f8" stroke="#8e8e8e" stroke-width="1" stroke-linejoin="round"/><path d="M14 5.5v3h3" fill="none" stroke="#8e8e8e" stroke-width="0.9"/><path d="M9 11.0h6" stroke="#a8a8a8" stroke-width="0.9"/><path d="M9 13.3h6" stroke="#a8a8a8" stroke-width="0.9"/><path d="M9 15.600000000000001h6" stroke="#a8a8a8" stroke-width="0.9"/><path d="M9 17.900000000000002h6" stroke="#a8a8a8" stroke-width="0.9"/></svg>
<svg class="i" style="left:427px;top:92px;" width="24" height="24" viewBox="0 0 24 24"><path d="M5.5 4.5h15.5v10h-15.5l-4.5 -5z" fill="#fbdc3f" stroke="#d1a90f" stroke-linejoin="round"/><text x="5.2" y="12.5" font-size="9" font-weight="bold" fill="#2a2a2a" font-family="Liberation Sans,sans-serif" letter-spacing="-0.2">abc</text></svg>
<svg class="i" style="left:463px;top:92px;" width="24" height="24" viewBox="0 0 24 24"><path d="M12 10.6L3.9 2.6A11.5 11.5 0 0 1 20.1 2.600z" fill="#ee2a2a" stroke="#c01418" stroke-width="0.8" stroke-linejoin="round"/><path d="M11.1 13L2.7 4.600A11.5 11.5 0 0 0 11.1 24.300z" fill="#84d42c" stroke="#5aa516" stroke-width="0.8" stroke-linejoin="round"/><path d="M12.9 13L21.3 4.600A11.5 11.5 0 0 1 12.9 24.300z" fill="#fce440" stroke="#d1a90f" stroke-width="0.8" stroke-linejoin="round"/></svg>
<svg class="i" style="left:498px;top:92px;" width="24" height="24" viewBox="0 0 24 24"><rect x="0.75" y="2.75" width="22.5" height="19" rx="1" fill="#dbe6f3" stroke="#2a7de1" stroke-width="1.5"/><path d="M5.5 4.5h14v10h-15.5l-4.5 -5z" fill="#fbdc3f" stroke="#d1a90f" stroke-linejoin="round"/><text x="5.2" y="12.5" font-size="9" font-weight="bold" fill="#2a2a2a" font-family="Liberation Sans,sans-serif" letter-spacing="-0.2">ab</text><path d="M16 6.500l2 7" stroke="#fafafa" stroke-width="2.2" stroke-linecap="round"/><path d="M16 6.500l2 7" stroke="#b4b4b4" stroke-width="0.5" fill="none"/><circle cx="18.8" cy="18" r="4.6" fill="#9c2026"/><circle cx="17.6" cy="16.6" r="1.5" fill="#e07070" opacity="0.6"/></svg>
<svg class="i" style="left:533px;top:92px;" width="24" height="24" viewBox="0 0 24 24"><path d="M5.5 4.5h15.5v10h-15.5l-4.5 -5z" fill="#e9e9e9" stroke="#b4b4b4" stroke-linejoin="round"/><text x="5.2" y="12.5" font-size="9" font-weight="bold" fill="#8e8e8e" font-family="Liberation Sans,sans-serif" letter-spacing="-0.2">ab</text><path d="M16 6.500l2 7" stroke="#fafafa" stroke-width="2.2" stroke-linecap="round"/><path d="M16 6.500l2 7" stroke="#b4b4b4" stroke-width="0.5" fill="none"/><circle cx="18.8" cy="18" r="4.6" fill="#9a9a9a"/><circle cx="17.6" cy="16.6" r="1.5" fill="#d0d0d0" opacity="0.6"/></svg>
<svg class="i" style="left:568px;top:92px;" width="24" height="24" viewBox="0 0 24 24"><path d="M5.5 4.5h15.5v10h-15.5l-4.5 -5z" fill="#e9e9e9" stroke="#b4b4b4" stroke-linejoin="round"/><text x="5.2" y="12.5" font-size="9" font-weight="bold" fill="#8e8e8e" font-family="Liberation Sans,sans-serif" letter-spacing="-0.2">abc</text><path d="M8.5 19q7 -6.5 14.5 0q-7.5 6 -14.5 0z" fill="#f4f4f4" stroke="#8e8e8e" stroke-width="0.9"/><path d="M9 16.500q7 -4.5 13 -.5" fill="none" stroke="#8e8e8e" stroke-width="0.8"/><circle cx="15.5" cy="19" r="2.6" fill="#a2a2a2"/><circle cx="15.5" cy="19" r="1.2" fill="#555"/></svg>
<svg class="i" style="left:603px;top:92px;" width="24" height="24" viewBox="0 0 24 24"><path d="M5.5 4.5h15.5v10h-15.5l-4.5 -5z" fill="#e9e9e9" stroke="#b4b4b4" stroke-linejoin="round"/><text x="5.2" y="12.5" font-size="9" font-weight="bold" fill="#8e8e8e" font-family="Liberation Sans,sans-serif" letter-spacing="-0.2">abc</text><rect x="13.3" y="13.3" width="10.5" height="10.5" rx="1.8" fill="#7e7e7e"/><path d="M14.8 17.05h4v-2.5l4 4l-4 4v-2.5h-4z" fill="#fff"/></svg>
<svg class="i" style="left:638px;top:92px;" width="24" height="24" viewBox="0 0 24 24"><path d="M5.5 4.5h15.5v10h-15.5l-4.5 -5z" fill="#e9e9e9" stroke="#b4b4b4" stroke-linejoin="round"/><text x="5.2" y="12.5" font-size="9" font-weight="bold" fill="#8e8e8e" font-family="Liberation Sans,sans-serif" letter-spacing="-0.2">abc</text><rect x="13.3" y="13.3" width="10.5" height="10.5" rx="1.8" fill="#7e7e7e"/><path d="M16.2 19.500a2.8 2.8 0 1 1 3.6 1.5" fill="none" stroke="#fff" stroke-width="1.5"/><path d="M17.5 20.300l3.5 -1l.3 3.500z" fill="#fff"/></svg>
<svg class="i" style="left:673px;top:92px;" width="24" height="24" viewBox="0 0 24 24"><path d="M5.5 4.5h15.5v10h-15.5l-4.5 -5z" fill="#e9e9e9" stroke="#b4b4b4" stroke-linejoin="round"/><text x="5.2" y="12.5" font-size="9" font-weight="bold" fill="#8e8e8e" font-family="Liberation Sans,sans-serif" letter-spacing="-0.2">abc</text><rect x="13.3" y="13.3" width="10.5" height="10.5" rx="1.8" fill="#bdbdbd"/><path d="M15.5 21.800l6 -6" stroke="#fff" stroke-width="2.3" stroke-linecap="round"/></svg>
<svg class="i" style="left:722px;top:92px;" width="24" height="24" viewBox="0 0 24 24"><circle cx="12" cy="10.5" r="11.5" fill="url(#gGlobe)" stroke="#5b8cc4" stroke-width="0.8"/><path d="M7.5 1.500q-3.5 9 0 18M16.5 1.500q3.5 9 0 18" fill="none" stroke="#fff" stroke-width="0.8" opacity="0.8"/><path d="M2.5 5.500q1 -3 4.5 -4.500q-1.5 2 -1.8 4.500zM2 14.500q-1.8 -4 0 -8h3q-.8 4 0 8zM2.8 15.800h2.500q.5 3 2 4.500q-3.3 -1.5 -4.5 -4.500zM9 0.500h6l1 5h-8zM21.5 5.500q-1 -3 -4.5 -4.500q1.5 2 1.8 4.500zM22 14.500q1.8 -4 0 -8h-3q.8 4 0 8zM8.5 16h7l-1 5.500h-5z" fill="#6a6a6a" opacity="0.85"/><path d="M0.5 10.500h23M2 5.800h20M2 15.200h20" stroke="#fff" stroke-width="0.9" opacity="0.85"/><rect x="15" y="14.8" width="9.5" height="9.5" rx="1.8" fill="#5a9a58" stroke="#d9e8d8" stroke-width="0.6"/><path d="M19.75 16.2v6.7M16.4 19.55h6.7" stroke="#fff" stroke-width="2.5"/><path d="M21 22h5l-2.5 3z" fill="#000"/></svg>
<svg class="i" style="left:757px;top:92px;" width="24" height="24" viewBox="0 0 24 24"><rect x="1" y="7.5" width="11" height="12.5" fill="#e4e4e4" stroke="#b4b4b4"/><rect x="2.5" y="1.5" width="20.5" height="18" fill="#fff" stroke="#a8a8a8"/><text x="12.8" y="14.5" font-size="10.5" text-anchor="middle" fill="#4a4a4a" font-family="Liberation Mono,monospace" letter-spacing="-0.2">CSW</text></svg>
<svg class="i" style="left:806px;top:92px;" width="24" height="24" viewBox="0 0 24 24"><path d="M11.5 0.800q-5.3 0 -5.3 3.400v3h5.600v1h-8q-3.3 0 -3.3 4.800t3.3 4.800h2.200v-3.300q0 -3 3.3 -3h5.400q2.8 0 2.8 -2.800v-4.500q0 -3.4 -6 -3.400z" fill="#3572a5"/><circle cx="8.6" cy="3.7" r="1.1" fill="#fff"/><path d="M13 23.300q5.3 0 5.3 -3.400v-3h-5.600v-1h8q3.3 0 3.3 -4.800t-3.3 -4.800h-2.200v3.300q0 3 -3.3 3h-5.400q-2.8 0 -2.8 2.800v4.500q0 3.4 6 3.400z" fill="#fcd43e"/><circle cx="15.9" cy="20.3" r="1.1" fill="#fff"/><path d="M12.5 16.500h5" stroke="#fff" stroke-width="1"/><path d="M17 16l5.5 3l-5.5 3" fill="none" stroke="#3a3a3a" stroke-width="1.5"/></svg>
<svg class="i" style="left:14px;top:140px;" width="24" height="24" viewBox="0 0 24 24"><path d="M10.6 4.500l-1.5 4q-4 2.5 -3.5 7q.5 2.5 2.5 4M10.6 4.500l1.5 4q3 2 3 5" fill="none" stroke="#3a3a3a" stroke-width="0.9"/><path d="M5 8.300h9" stroke="#3a3a3a" stroke-width="0.9"/><circle cx="10.6" cy="2.5" r="2" fill="#fafafa" stroke="#3a3a3a" stroke-width="0.9"/><rect x="13.2" y="12.8" width="10.8" height="10.8" rx="2" fill="#3a6584"/><path d="M18.3 15.300h-3v5.800h3M17 18.200h6M19.5 16l-2.3 2.200l2.3 2.2" fill="none" stroke="#fff" stroke-width="1.2"/></svg>
<svg class="i" style="left:14px;top:174px;" width="24" height="24" viewBox="0 0 24 24"><path d="M3 15q1.5 7.5 10 9M5.5 15q1 5 7.5 6.5" fill="none" stroke="#2b3f5c" stroke-width="1"/><path d="M7.5 14.500q1 3.5 5.5 4.5" fill="none" stroke="#6a96c9" stroke-width="1"/><rect x="3.5" y="4.5" width="19.5" height="7.5" rx="1" fill="#dfe9f5" stroke="#2f5a93" stroke-width="1.2"/><path d="M6 5h2.500v6.500h-2.500zM15.5 5h3.500v6.500h-3.500z" fill="#a9c6e8"/><path d="M8.7 2.500h4.800v1.500h.8v8.500h-.8v1.300h-2v1.700h-.9v-1.700h-1.900z" fill="#6a96c9" stroke="#2f5a93" stroke-width="1"/></svg>
<svg class="i" style="left:14px;top:206px;" width="24" height="24" viewBox="0 0 24 24"><path d="M9 4.500q5 -3 12.5 -2q2.5 1 1.8 5.500q.5 5 -1.5 6q-4 2 -7.5 1.800q-2 -1 -1.5 -4q-1 -3.5 -3.8 -7.300z" fill="none" stroke="#4a4a4a" stroke-width="0.9"/><path d="M1.5 4.600l5 17.8" stroke="#3f6fb0" stroke-width="0.9"/><path d="M10.4 22.400l6.1 -16h5.2" fill="none" stroke="#d8141c" stroke-width="1"/><circle cx="1.5" cy="4.6" r="1.2" fill="#f0f0f0" stroke="#3f6fb0" stroke-width="0.9"/><circle cx="6.5" cy="22.4" r="1.2" fill="#f0f0f0" stroke="#3f6fb0" stroke-width="0.9"/><circle cx="19.5" cy="19.4" r="1.2" fill="#f0f0f0" stroke="#3f6fb0" stroke-width="0.9"/><circle cx="16.5" cy="23.3" r="1.2" fill="#f0f0f0" stroke="#3f6fb0" stroke-width="0.9"/><circle cx="10.4" cy="22.4" r="1.2" fill="#fdeaea" stroke="#d8141c" stroke-width="0.9"/><circle cx="16.5" cy="6.4" r="1.2" fill="#fdeaea" stroke="#d8141c" stroke-width="0.9"/><circle cx="21.7" cy="6.4" r="1.2" fill="#fdeaea" stroke="#d8141c" stroke-width="0.9"/><circle cx="19.5" cy="12.4" r="1.2" fill="#fdeaea" stroke="#d8141c" stroke-width="0.9"/></svg>
<svg class="i" style="left:14px;top:242px;" width="24" height="24" viewBox="0 0 24 24"><rect x="0.5" y="1.5" width="22" height="19.5" fill="#fafafa" stroke="#3f73c4" stroke-width="1.2"/><rect x="1" y="2" width="21" height="4" fill="url(#gBlue)"/><rect x="21" y="2" width="1.8" height="19" fill="#5b80bd"/><path d="M2.5 8.500h6M2.5 11.500h6M2.5 14.500h6M2.5 17.500h6" stroke="#ee3a3a" stroke-width="1.3"/><path d="M10.5 11.500h9M10.5 14.500h9M10.5 17.500h9" stroke="#bdbdbd" stroke-width="1.3"/><path d="M4 14.500l17 -11" stroke="#b46a10" stroke-width="4.6" stroke-linecap="round"/><path d="M6.5 12.500l14.5 -9.5" stroke="#eda032" stroke-width="2.6" stroke-linecap="round"/><path d="M2.5 15.500l3 -2.800l1.5 2.300z" fill="#e8e8e8" stroke="#8a8a8a" stroke-width="0.6"/></svg>
<svg class="i" style="left:8px;top:290px;" width="24" height="24" viewBox="0 0 24 24"><path d="M2.5 2.4L8.7 17L15.5 2.4L21.6 2.7" fill="none" stroke="#35587f" stroke-width="1.3"/><circle cx="2.5" cy="2.4" r="1.9" fill="#f0f0f0" stroke="#35587f" stroke-width="1.3"/><circle cx="15.5" cy="2.4" r="1.9" fill="#f0f0f0" stroke="#35587f" stroke-width="1.3"/><circle cx="21.6" cy="2.7" r="1.9" fill="#f0f0f0" stroke="#35587f" stroke-width="1.3"/><circle cx="8.7" cy="17" r="1.9" fill="#f0f0f0" stroke="#35587f" stroke-width="1.3"/><rect x="14.2" y="14.2" width="9.8" height="9.8" rx="1.8" fill="#5a9a58" stroke="#d9e8d8" stroke-width="0.6"/><path d="M19.1 15.6v7.0M15.6 19.1h7.0" stroke="#fff" stroke-width="2.5"/></svg>
<svg class="i" style="left:8px;top:324px;" width="24" height="24" viewBox="0 0 24 24"><rect x="0.0" y="0.0" width="6.55" height="6.55" fill="#203a5e"/><rect x="0.0" y="6.5" width="6.55" height="6.55" fill="#6a96c9"/><rect x="0.0" y="13.0" width="6.55" height="6.55" fill="#203a5e"/><rect x="6.5" y="0.0" width="6.55" height="6.55" fill="#6a96c9"/><rect x="6.5" y="6.5" width="6.55" height="6.55" fill="#203a5e"/><rect x="6.5" y="13.0" width="6.55" height="6.55" fill="#6a96c9"/><rect x="13.0" y="0.0" width="6.55" height="6.55" fill="#203a5e"/><rect x="13.0" y="6.5" width="6.55" height="6.55" fill="#6a96c9"/><rect x="15" y="14.8" width="9.2" height="9.2" rx="1.8" fill="#5a9a58" stroke="#d9e8d8" stroke-width="0.6"/><path d="M19.6 16.2v6.4M16.4 19.4h6.4" stroke="#fff" stroke-width="2.5"/></svg>
<svg class="i" style="left:8px;top:358px;" width="24" height="24" viewBox="0 0 24 24"><path d="M23 0q1 4.5 -1.5 7.500q-5 3.5 -9 9.500q-2 3 -6 5q-2 1 -4 -1.500q3.5 -12.5 12 -17q4 -1.5 8.5 -3.500z" fill="#8fb3dd" stroke="#2f4e78" stroke-width="0.8"/><path d="M0.5 23.500q2 -9 7 -14q5 -4.5 14.5 -8.5" fill="none" stroke="#1f3a5f" stroke-width="1.2"/><path d="M8 15l7 -5M10 17.500l8 -6.500M12 10.500l6 -4" stroke="#dbe8f6" stroke-width="0.9"/><rect x="15" y="15" width="9.2" height="9.2" rx="1.8" fill="#5a9a58" stroke="#d9e8d8" stroke-width="0.6"/><path d="M19.6 16.4v6.4M16.4 19.6h6.4" stroke="#fff" stroke-width="2.5"/></svg>
<svg class="i" style="left:8px;top:392px;" width="24" height="24" viewBox="0 0 24 24"><path d="M3 0.800q-3 .5 -2.7 5q.5 5 2.7 7.700q1 1.2 2.7 0l1 -.8q.5 2 2.5 2.300l.5 3q1.3 1.5 3.6 0q.8 -2.5 .5 -5.500l3.5 -.3q.8 -.8 -.2 -1.200h-2.300q2.5 -3 2.8 -7q0 -3 -3.5 -3.300q-2 -.3 -3.5 .5q-1.5 -.7 -3.6 -.6q-2 -.4 -4 .2z" fill="#5b8cc4" stroke="#2f4e78" stroke-width="1"/><path d="M6.5 2q-1 5 -.3 10.500M10.5 3q-1.5 3 -1 9M13.5 2.500q1.5 3 .500 7" fill="none" stroke="#2f4e78" stroke-width="0.9"/><circle cx="12.2" cy="5.5" r="0.7" fill="#1f3a5f"/><rect x="15" y="14.8" width="9.2" height="9.2" rx="1.8" fill="#5a9a58" stroke="#d9e8d8" stroke-width="0.6"/><path d="M19.6 16.2v6.4M16.4 19.4h6.4" stroke="#fff" stroke-width="2.5"/></svg>
<svg class="i" style="left:8px;top:426px;" width="24" height="24" viewBox="0 0 24 24"><circle cx="12" cy="10.4" r="11.5" fill="#a9c8ea" stroke="#5b8cc4" stroke-width="1"/><path d="M3.5 5.500l4 -1.500l2 1l-1 3l-2.5 1.500l-1.5 3l-2 -2zM11 4l4 -1l6 2.500l1 4l-2.5 4l-2 -1l-1.5 3l-2 -3.500l-3 -1l1 -3.500l-2 -1.500zM7 13l2.5 1.500l-.5 4l-2 -2zM13 15.500l2.5 .5l-1 3.500z" fill="#35587f" opacity="0.9"/><path d="M0.5 10.400h23M2.5 5h19M2.5 16h19M12 -1v23M12 -1q-8 11.4 0 23M12 -1q8 11.4 0 23" fill="none" stroke="#dbe8f6" stroke-width="0.7" opacity="0.8"/><rect x="15" y="15" width="9.2" height="9.2" rx="1.8" fill="#5a9a58" stroke="#d9e8d8" stroke-width="0.6"/><path d="M19.6 16.4v6.4M16.4 19.6h6.4" stroke="#fff" stroke-width="2.5"/></svg>
<svg class="i" style="left:8px;top:460px;" width="24" height="24" viewBox="0 0 24 24"><circle cx="12" cy="10.5" r="11.3" fill="#6a96c9" stroke="#1f3a5f" stroke-width="1.2"/><path d="M0.6999999999999993 10.5h22.6M2.2 4.8h19.7M2.2 16.1h19.7M12 -0.8000000000000007v22.6M12 -0.8000000000000007q-10.7 11.3 0 22.6M12 -0.8000000000000007q10.7 11.3 0 22.6" fill="none" stroke="#fff" stroke-width="0.9"/><path d="M1.5 6h4.500v4h-5.300zM18 6h4.500l.8 4h-5.300zM1 11.500h5v4h-4zM6.8 11.500h10.400v4.300h-10.400zM8.5 1.300q3.5 -1.3 7 0l1 4h-9zM3 16.500h3.500l1.5 4q-3 -1 -5 -4zM17.5 16.500h3.500q-2 3 -5 4z" fill="#1f4477" opacity="0.85"/><path d="M0.7 10.700h22.600M2 5.600h20M2 15.900h20M6.5 2.500q-1.5 8 0 16M17.5 2.500q1.5 8 0 16" fill="none" stroke="#fff" stroke-width="1"/><rect x="15" y="15" width="9.2" height="9.2" rx="1.8" fill="#5a9a58" stroke="#d9e8d8" stroke-width="0.6"/><path d="M19.6 16.4v6.4M16.4 19.6h6.4" stroke="#fff" stroke-width="2.5"/></svg>
<svg class="i" style="left:8px;top:494px;" width="24" height="24" viewBox="0 0 24 24"><circle cx="12" cy="10.5" r="11.3" fill="#eef4fb" stroke="#5b8cc4" stroke-width="1"/><path d="M0.6999999999999993 10.5h22.6M2.2 4.8h19.7M2.2 16.1h19.7M12 -0.8000000000000007v22.6M12 -0.8000000000000007q-10.7 11.3 0 22.6M12 -0.8000000000000007q10.7 11.3 0 22.6" fill="none" stroke="#a9c6e8" stroke-width="0.9"/><path d="M5.5 5.500l3 9.500l5.5 -9.500h4" fill="none" stroke="#1f2f4a" stroke-width="1"/><circle cx="5.5" cy="5.5" r="1.3" fill="#fff" stroke="#1f2f4a" stroke-width="0.9"/><circle cx="14" cy="5.5" r="1.3" fill="#fff" stroke="#1f2f4a" stroke-width="0.9"/><circle cx="18.5" cy="5.5" r="1.3" fill="#fff" stroke="#1f2f4a" stroke-width="0.9"/><circle cx="5.7" cy="18" r="5.5" fill="#1f6fd0" stroke="#4a4a4a" stroke-width="0.8"/><path d="M2 16.500l2.5 -2.500l2 1l-1 2.500l1.5 2l-1 3l-2.5 -1zM7.5 14l2.5 1l1 3l-1.5 3l-1.5 -2z" fill="#2ca42a"/><rect x="15" y="15" width="9.2" height="9.2" rx="1.8" fill="#5a9a58" stroke="#d9e8d8" stroke-width="0.6"/><path d="M19.6 16.4v6.4M16.4 19.6h6.4" stroke="#fff" stroke-width="2.5"/></svg>
<svg class="i" style="left:11px;top:528px;" width="24" height="24" viewBox="0 0 24 24"><path d="M8.5 1q5.5 -.5 6.3 5q.5 6.5 -7.3 11.500l-1.3 -1.400q4.5 -3.5 4.5 -7q-2.5 1.5 -5 .2q-2 -1.5 -1.7 -4q.500 -3.8 4.5 -4.300z" fill="#5b8cc4" stroke="#4a78ae" stroke-width="0.6"/><rect x="12" y="14.8" width="9.2" height="9.2" rx="1.8" fill="#5a9a58" stroke="#d9e8d8" stroke-width="0.6"/><path d="M16.6 16.2v6.4M13.4 19.4h6.4" stroke="#fff" stroke-width="2.5"/></svg>
<svg class="i" style="left:8px;top:562px;" width="24" height="24" viewBox="0 0 24 24"><rect x="1.5" y="1.5" width="21.5" height="21.5" rx="3" fill="url(#gVirt)" stroke="#7d9cc4" stroke-width="0.9"/><path d="M2.5 3.4L8.7 18L15.5 3.4L21.6 3.7" fill="none" stroke="#35587f" stroke-width="1.3"/><circle cx="2.5" cy="3.4" r="1.9" fill="#d6e2f1" stroke="#35587f" stroke-width="1.3"/><circle cx="15.5" cy="3.4" r="1.9" fill="#d6e2f1" stroke="#35587f" stroke-width="1.3"/><circle cx="21.6" cy="3.7" r="1.9" fill="#d6e2f1" stroke="#35587f" stroke-width="1.3"/><circle cx="8.7" cy="18" r="1.9" fill="#d6e2f1" stroke="#35587f" stroke-width="1.3"/><rect x="14.2" y="14.2" width="9.8" height="9.8" rx="1.8" fill="#5a9a58" stroke="#d9e8d8" stroke-width="0.6"/><path d="M19.1 15.6v7.0M15.6 19.1h7.0" stroke="#fff" stroke-width="2.5"/></svg>
<svg class="i" style="left:8px;top:596px;" width="24" height="24" viewBox="0 0 24 24"><path d="M2.5 2.4L8.7 17L15.5 2.4L21.6 2.7" fill="none" stroke="#35587f" stroke-width="1.3"/><circle cx="2.5" cy="2.4" r="1.9" fill="#f0f0f0" stroke="#35587f" stroke-width="1.3"/><circle cx="15.5" cy="2.4" r="1.9" fill="#f0f0f0" stroke="#35587f" stroke-width="1.3"/><circle cx="21.6" cy="2.7" r="1.9" fill="#f0f0f0" stroke="#35587f" stroke-width="1.3"/><circle cx="8.7" cy="17" r="1.9" fill="#f0f0f0" stroke="#35587f" stroke-width="1.3"/><rect x="15" y="14.8" width="9.2" height="9.2" rx="1.6" fill="#cba20c"/><path d="M15.7 19.4L23.5 19.4M16.9 16.7L22.3 22.1M19.6 15.5L19.6 23.3M22.3 16.7L16.9 22.1" stroke="#fff" stroke-width="1.3"/><circle cx="19.6" cy="19.4" r="1.2" fill="#cba20c"/></svg>
<svg class="i" style="left:14px;top:630px;" width="24" height="24" viewBox="0 0 24 24"><path d="M3 15q1.5 7.5 10 9M5.5 15q1 5 7.5 6.5" fill="none" stroke="#2b3f5c" stroke-width="1"/><path d="M7.5 14.500q1 3.5 5.5 4.5" fill="none" stroke="#6a96c9" stroke-width="1"/><rect x="3.5" y="4.5" width="19.5" height="7.5" rx="1" fill="#dfe9f5" stroke="#2f5a93" stroke-width="1.2"/><path d="M6 5h2.500v6.500h-2.500zM15.5 5h3.500v6.500h-3.500z" fill="#a9c6e8"/><path d="M8.7 2.500h4.800v1.500h.8v8.500h-.8v1.300h-2v1.700h-.9v-1.700h-1.900z" fill="#6a96c9" stroke="#2f5a93" stroke-width="1"/><rect x="15" y="15" width="9.2" height="9.2" rx="1.6" fill="#cba20c"/><path d="M15.7 19.6L23.5 19.6M16.9 16.9L22.3 22.3M19.6 15.7L19.6 23.5M22.3 16.9L16.9 22.3" stroke="#fff" stroke-width="1.3"/><circle cx="19.6" cy="19.6" r="1.2" fill="#cba20c"/></svg>
<svg class="i" style="left:14px;top:664px;" width="24" height="24" viewBox="0 0 24 24"><rect x="1.3" y="2.8" width="19.6" height="14" rx="5" fill="#6a96c9" stroke="#35587f" stroke-width="1.2"/><path d="M3.5 4.500h5v5h-6.500v-1q0 -3 1.5 -4zM14.5 4.500h4.300q1.5 1 1.5 4v1h-5.800zM8.5 9.500h6v6.500h-6z" fill="#203a5e"/><rect x="15" y="14.8" width="9.2" height="9.2" rx="1.8" fill="#5a9a58" stroke="#d9e8d8" stroke-width="0.6"/><path d="M19.6 16.2v6.4M16.4 19.4h6.4" stroke="#fff" stroke-width="2.5"/></svg>
<svg class="i" style="left:1080px;top:151px;" width="16" height="16" viewBox="0 0 16 16"><path d="M1.5 7a6.5 6 0 0 1 11.3 -3.500l1.8 -1.800v6.300h-6.300l2.1 -2.100a3.8 3.5 0 0 0 -6.2 1.100z" fill="url(#gBlue)"/><path d="M14.8 9.500a6.5 6 0 0 1 -11.3 3.500l-1.8 1.800v-6.300h6.300l-2.1 2.100a3.8 3.5 0 0 0 6.2 -1.100z" fill="url(#gBlue)"/></svg>
<svg class="i" style="left:1107px;top:151px;" width="16" height="16" viewBox="0 0 16 16"><path d="M0.8 1.500q0 -1 1 -1h12.400q1 0 1 1l-5.7 7v7.500l-3 -1.500v-6z" fill="#6a96c9" stroke="#4a78ae" stroke-width="0.8" stroke-linejoin="round"/><path d="M2 2h12" stroke="#f6e23a" stroke-width="1.8"/></svg>
<svg class="i" style="left:1134px;top:151px;" width="16" height="16" viewBox="0 0 16 16"><path d="M1 2.500h9M2.5 2.500v11.500M2.5 8h3M2.5 13.500h3" fill="none" stroke="#9a9a9a" stroke-width="0.9"/><rect x="5.5" y="6" width="3.5" height="3.5" fill="#fff" stroke="#f59a1a" stroke-width="1.1"/><rect x="5.5" y="11.5" width="3.5" height="3.5" fill="#fff" stroke="#f59a1a" stroke-width="1.1"/><path d="M11.5 15v-8h-3.500l4.5 -6l4.5 6h-3.500v8z" fill="#5b8cc4" stroke="#2f5a93" stroke-width="0.8" stroke-linejoin="round"/></svg>
<svg class="i" style="left:1161px;top:151px;" width="16" height="16" viewBox="0 0 16 16"><circle cx="8" cy="8" r="7.3" fill="url(#gInfo)" stroke="#8fb0d8" stroke-width="0.7"/><text x="7.8" y="12.5" font-size="13" font-weight="bold" font-style="italic" text-anchor="middle" fill="#fff" font-family="Liberation Serif,serif">i</text></svg>
<svg class="i" style="left:1082px;top:451px;" width="16" height="16" viewBox="0 0 16 16"><path d="M3.5 3v10M6 1v11M8.5 2.500v10M1 12h9" fill="none" stroke="#35587f" stroke-width="1"/><rect x="5" y="9.5" width="6.5" height="6.5" rx="1.2" fill="#5a9a58"/><path d="M8.25 10.800v4M6.3 12.750h4" stroke="#fff" stroke-width="1.4"/></svg>
<svg class="i" style="left:1108px;top:451px;" width="16" height="16" viewBox="0 0 16 16"><path d="M0.5 8q7 -7 14.5 0q-7.5 6 -14.5 0z" fill="#fafafa" stroke="#a8a8a8" stroke-width="0.9"/><path d="M1 5.500q7 -4.5 13.5 0" fill="none" stroke="#bdbdbd" stroke-width="0.9"/><circle cx="7.5" cy="7.5" r="3" fill="#5b8cc4" stroke="#35587f" stroke-width="0.6"/><circle cx="7.5" cy="7.3" r="1.3" fill="#1a1a1a"/><path d="M12.5 14h5l-2.5 3z" fill="#000"/></svg>
<svg class="i" style="left:1134px;top:451px;" width="16" height="16" viewBox="0 0 16 16"><path d="M0.8 1.500q0 -1 1 -1h12.400q1 0 1 1l-5.7 7v7.500l-3 -1.500v-6z" fill="#6a96c9" stroke="#4a78ae" stroke-width="0.8" stroke-linejoin="round"/><path d="M2 2h12" stroke="#f6e23a" stroke-width="1.8"/></svg>
<svg class="i" style="left:1162px;top:451px;" width="16" height="16" viewBox="0 0 16 16"><text x="-0.5" y="10.5" font-size="17" fill="#7b3d80" font-family="Liberation Serif,serif">ε</text><path d="M7.5 8.500h8v1.500l-1 1v5h-6v-5l-1 -1z" fill="#c4c4c4" stroke="#a8a8a8" stroke-width="0.7"/><rect x="10" y="11.5" width="3" height="4.5" fill="#fafafa"/></svg>
<svg class="i" style="left:1200px;top:451px;" width="16" height="16" viewBox="0 0 16 16"><path d="M1 2.500h9M2.5 2.500v11.500M2.5 8h3M2.5 13.500h3" fill="none" stroke="#9a9a9a" stroke-width="0.9"/><rect x="5.5" y="6" width="3.5" height="3.5" fill="#fff" stroke="#f59a1a" stroke-width="1.1"/><rect x="5.5" y="11.5" width="3.5" height="3.5" fill="#fff" stroke="#f59a1a" stroke-width="1.1"/><path d="M11.5 1v8h-3.500l4.5 6l4.5 -6h-3.500v-8z" fill="#5b8cc4" stroke="#2f5a93" stroke-width="0.8" stroke-linejoin="round"/></svg>
<svg class="i" style="left:1227px;top:451px;" width="16" height="16" viewBox="0 0 16 16"><path d="M1 2.500h9M2.5 2.500v11.500M2.5 8h3M2.5 13.500h3" fill="none" stroke="#9a9a9a" stroke-width="0.9"/><rect x="5.5" y="6" width="3.5" height="3.5" fill="#fff" stroke="#f59a1a" stroke-width="1.1"/><rect x="5.5" y="11.5" width="3.5" height="3.5" fill="#fff" stroke="#f59a1a" stroke-width="1.1"/><path d="M11.5 15v-8h-3.500l4.5 -6l4.5 6h-3.500v8z" fill="#5b8cc4" stroke="#2f5a93" stroke-width="0.8" stroke-linejoin="round"/></svg>
<svg class="i" style="left:1255px;top:451px;" width="16" height="16" viewBox="0 0 16 16"><rect x="0.5" y="0.5" width="11.5" height="11" fill="#f4f4f4" stroke="#7a7a7a" stroke-width="1"/><rect x="8.5" y="9.5" width="6" height="4.5" rx="1" fill="#e8384a"/><path d="M9.8 11.750h3.4" stroke="#fff" stroke-width="1.2"/></svg>
<svg class="i" style="left:1183px;top:456px;" width="10" height="6" viewBox="0 0 10 6"><path d="M0 0h9.500l-4.750 5z" fill="#000"/></svg>
<svg class="i" style="left:632px;top:706px;" width="15" height="16" viewBox="0 0 15 16"><ellipse cx="9.5" cy="10.3" rx="4.8" ry="4.3" fill="#f4f4f4" stroke="#1a1a1a" stroke-width="1.2"/><path d="M2.5 0l6.5 8M5.5 0l5 6.500M8.5 0l3.5 5M3.5 4.500l4 5" stroke="#1a1a1a" stroke-width="1.2"/><circle cx="9.8" cy="10.5" r="1.5" fill="#fff" stroke="#1a1a1a" stroke-width="1"/><path d="M0.3 9.300h1.5" stroke="#1a1a1a" stroke-width="0.8"/></svg>
<svg class="i" style="left:786px;top:704px;" width="12" height="17" viewBox="0 0 12 17"><path d="M2.2 9v-9M9.8 9v-9" stroke="#8a8a8a" stroke-width="1.8"/><path d="M2.2 9v-9M9.8 9v-9" stroke="#d0d0d0" stroke-width="0.6"/><rect x="0.2" y="9" width="11.7" height="7.7" rx="1.8" fill="#5c5c5c"/></svg>
<svg class="i" style="left:1196px;top:704px;" width="17" height="17" viewBox="0 0 17 17"><circle cx="8.3" cy="8.5" r="7.5" fill="#3a3a3a" stroke="#1a1a1a" stroke-width="0.8"/><ellipse cx="8.3" cy="8.5" rx="3.6" ry="7.3" fill="none" stroke="#e4e4e4" stroke-width="0.9"/><ellipse cx="8.3" cy="8.5" rx="7.3" ry="3.6" fill="none" stroke="#e4e4e4" stroke-width="0.9"/><rect x="5.3" y="5.5" width="6" height="6" fill="none" stroke="#fff" stroke-width="0.8"/></svg>
<svg class="i" style="left:1334px;top:706px;" width="18" height="16" viewBox="0 0 18 16"><path d="M8.5 0.500q8 0 8 6q0 4 -4 5.500q1 2.5 3 3.300q-4 .300 -6.5 -2.800q-8.5 0 -8.5 -6q0 -6 8 -6z" fill="#7a7a7a"/><circle cx="4.8" cy="6.5" r="1.3" fill="#fff"/><circle cx="8.5" cy="6.5" r="1.3" fill="#fff"/><circle cx="12.2" cy="6.5" r="1.3" fill="#fff"/></svg>
<svg class="i" style="left:187px;top:101px;" width="10" height="6" viewBox="0 0 10 6"><path d="M0 0h10l-5 5.5z" fill="#9a9a9a"/></svg>
</div>
<!-- Layer Properties dialog -->
<div class="dialog" style="left:0;top:0">
<div style="left:179px;top:122px;width:906px;height:587px;background:#f0f0f0;border:1px solid #f0762b;box-shadow:0 4px 18px 1px rgba(0,0,0,.31)"></div>
<div style="left:180px;top:123px;width:904px;height:30px;background:#fff"></div>
<span class="t" style="left:208.7px;top:132px;font-size:12px;letter-spacing:-0.37px;">Layer Properties - crime_subset_SPE | Style</span>
<span class="t" style="left:1013.2px;top:130px;font-size:14px;">?</span>
<svg class="i" style="left:1055px;top:131px;" width="12" height="12" viewBox="0 0 12 12"><path d="M1.2 1.2l10 10M11.2 1.2l-10 10" stroke="#000" stroke-width="1.2" fill="none"/></svg>
<div style="left:180px;top:153px;width:150px;height:555px;background:#5b5b5b"></div>
<div style="left:180px;top:187px;width:150px;height:34px;background:#f0f0f0"></div>
<span class="t" style="left:216.2px;top:166px;font-size:11px;color:#fff;letter-spacing:-0.38px;">General</span>
<span class="t" style="left:219.3px;top:200px;font-size:11px;letter-spacing:-0.02px;">Style</span>
<span class="t" style="left:216.2px;top:234px;font-size:11px;color:#fff;letter-spacing:-0.39px;">Labels</span>
<span class="t" style="left:216.2px;top:268px;font-size:11px;color:#fff;letter-spacing:-0.38px;">Fields</span>
<span class="t" style="left:216.2px;top:302px;font-size:11px;color:#fff;letter-spacing:-0.12px;">Rendering</span>
<span class="t" style="left:216.2px;top:336px;font-size:11px;color:#fff;letter-spacing:-0.32px;">Display</span>
<span class="t" style="left:217.1px;top:370px;font-size:11px;color:#fff;letter-spacing:-0.29px;">Actions</span>
<span class="t" style="left:217.1px;top:404px;font-size:11px;color:#fff;letter-spacing:-0.46px;">Joins</span>
<span class="t" style="left:216.2px;top:438px;font-size:11px;color:#fff;letter-spacing:-0.41px;">Diagrams</span>
<span class="t" style="left:216.2px;top:472px;font-size:11px;color:#fff;letter-spacing:0.02px;">Metadata</span>
<span class="t" style="left:217.1px;top:506px;font-size:11px;color:#fff;letter-spacing:-0.47px;">Variables</span>
<span class="t" style="left:216.2px;top:540px;font-size:11px;color:#fff;letter-spacing:-0.20px;">Legend</span>
<div class="btn" style="left:336px;top:295px;width:30px;height:25px;border-color:#c0c0c0"></div>
<div class="btn" style="left:372px;top:295px;width:30px;height:25px;border-color:#9a9a9a"></div>
<div class="btn" style="left:408px;top:295px;width:30px;height:25px;border-color:#9a9a9a"></div>
<div class="btn" style="left:444px;top:295px;width:30px;height:25px;border-color:#9a9a9a"></div>
<div class="btn" style="left:480px;top:295px;width:30px;height:25px;border-color:#9a9a9a"></div>
<div class="btn" style="left:516px;top:295px;width:30px;height:25px;border-color:#9a9a9a"></div>
<div class="btn" style="left:1065px;top:224px;width:16px;height:158px;border-radius:2px;border-color:#8a8a8a;background:linear-gradient(90deg,#e9e9e9,#fbfbfb 40%,#e4e4e4 85%,#d8d8d8)"></div>
<svg class="i" style="left:1069px;top:284px;" width="12" height="18" viewBox="0 0 12 18"><rect x="0" y="0" width="1" height="1" fill="#a8a8a8"/><rect x="1" y="1" width="1" height="1" fill="#fff"/><rect x="0" y="3" width="1" height="1" fill="#a8a8a8"/><rect x="1" y="4" width="1" height="1" fill="#fff"/><rect x="0" y="6" width="1" height="1" fill="#a8a8a8"/><rect x="1" y="7" width="1" height="1" fill="#fff"/><rect x="0" y="9" width="1" height="1" fill="#a8a8a8"/><rect x="1" y="10" width="1" height="1" fill="#fff"/><rect x="0" y="12" width="1" height="1" fill="#a8a8a8"/><rect x="1" y="13" width="1" height="1" fill="#fff"/><rect x="0" y="15" width="1" height="1" fill="#a8a8a8"/><rect x="1" y="16" width="1" height="1" fill="#fff"/><rect x="3" y="0" width="1" height="1" fill="#a8a8a8"/><rect x="4" y="1" width="1" height="1" fill="#fff"/><rect x="3" y="3" width="1" height="1" fill="#a8a8a8"/><rect x="4" y="4" width="1" height="1" fill="#fff"/><rect x="3" y="6" width="1" height="1" fill="#a8a8a8"/><rect x="4" y="7" width="1" height="1" fill="#fff"/><rect x="3" y="9" width="1" height="1" fill="#a8a8a8"/><rect x="4" y="10" width="1" height="1" fill="#fff"/><rect x="3" y="12" width="1" height="1" fill="#a8a8a8"/><rect x="4" y="13" width="1" height="1" fill="#fff"/><rect x="3" y="15" width="1" height="1" fill="#a8a8a8"/><rect x="4" y="16" width="1" height="1" fill="#fff"/><rect x="6" y="0" width="1" height="1" fill="#a8a8a8"/><rect x="7" y="1" width="1" height="1" fill="#fff"/><rect x="6" y="3" width="1" height="1" fill="#a8a8a8"/><rect x="7" y="4" width="1" height="1" fill="#fff"/><rect x="6" y="6" width="1" height="1" fill="#a8a8a8"/><rect x="7" y="7" width="1" height="1" fill="#fff"/><rect x="6" y="9" width="1" height="1" fill="#a8a8a8"/><rect x="7" y="10" width="1" height="1" fill="#fff"/><rect x="6" y="12" width="1" height="1" fill="#a8a8a8"/><rect x="7" y="13" width="1" height="1" fill="#fff"/><rect x="6" y="15" width="1" height="1" fill="#a8a8a8"/><rect x="7" y="16" width="1" height="1" fill="#fff"/></svg>
<div style="left:1065px;top:382px;width:16px;height:84px;background:#f7f7f7"></div>
<div class="btn" style="left:1065px;top:466px;width:16px;height:16px;border-color:#8a8a8a"></div>
<div class="btn" style="left:1065px;top:482px;width:16px;height:16px;border-color:#8a8a8a"></div>
<svg class="i" style="left:1069px;top:472px;" width="8" height="4" viewBox="0 0 8 4"><path d="M0 4h8l-4.0 -4z" fill="#000"/></svg>
<svg class="i" style="left:1069px;top:488px;" width="8" height="4" viewBox="0 0 8 4"><path d="M0 0h8l-4.0 4z" fill="#000"/></svg>
<div style="left:330px;top:153px;width:1px;height:555px;background:#f7f7f7"></div>
<svg class="i" style="left:332px;top:338px;" width="3" height="183" viewBox="0 0 3 183"><rect x="0" y="0" width="2" height="2" fill="#c4c4c4"/><rect x="1" y="1" width="2" height="2" fill="#fff"/><rect x="0" y="5" width="2" height="2" fill="#c4c4c4"/><rect x="1" y="6" width="2" height="2" fill="#fff"/><rect x="0" y="10" width="2" height="2" fill="#c4c4c4"/><rect x="1" y="11" width="2" height="2" fill="#fff"/><rect x="0" y="15" width="2" height="2" fill="#c4c4c4"/><rect x="1" y="16" width="2" height="2" fill="#fff"/><rect x="0" y="20" width="2" height="2" fill="#c4c4c4"/><rect x="1" y="21" width="2" height="2" fill="#fff"/><rect x="0" y="25" width="2" height="2" fill="#c4c4c4"/><rect x="1" y="26" width="2" height="2" fill="#fff"/><rect x="0" y="30" width="2" height="2" fill="#c4c4c4"/><rect x="1" y="31" width="2" height="2" fill="#fff"/><rect x="0" y="35" width="2" height="2" fill="#c4c4c4"/><rect x="1" y="36" width="2" height="2" fill="#fff"/><rect x="0" y="40" width="2" height="2" fill="#c4c4c4"/><rect x="1" y="41" width="2" height="2" fill="#fff"/><rect x="0" y="45" width="2" height="2" fill="#c4c4c4"/><rect x="1" y="46" width="2" height="2" fill="#fff"/><rect x="0" y="50" width="2" height="2" fill="#c4c4c4"/><rect x="1" y="51" width="2" height="2" fill="#fff"/><rect x="0" y="55" width="2" height="2" fill="#c4c4c4"/><rect x="1" y="56" width="2" height="2" fill="#fff"/><rect x="0" y="60" width="2" height="2" fill="#c4c4c4"/><rect x="1" y="61" width="2" height="2" fill="#fff"/><rect x="0" y="65" width="2" height="2" fill="#c4c4c4"/><rect x="1" y="66" width="2" height="2" fill="#fff"/><rect x="0" y="70" width="2" height="2" fill="#c4c4c4"/><rect x="1" y="71" width="2" height="2" fill="#fff"/><rect x="0" y="75" width="2" height="2" fill="#c4c4c4"/><rect x="1" y="76" width="2" height="2" fill="#fff"/><rect x="0" y="80" width="2" height="2" fill="#c4c4c4"/><rect x="1" y="81" width="2" height="2" fill="#fff"/><rect x="0" y="85" width="2" height="2" fill="#c4c4c4"/><rect x="1" y="86" width="2" height="2" fill="#fff"/><rect x="0" y="90" width="2" height="2" fill="#c4c4c4"/><rect x="1" y="91" width="2" height="2" fill="#fff"/><rect x="0" y="95" width="2" height="2" fill="#c4c4c4"/><rect x="1" y="96" width="2" height="2" fill="#fff"/><rect x="0" y="100" width="2" height="2" fill="#c4c4c4"/><rect x="1" y="101" width="2" height="2" fill="#fff"/><rect x="0" y="105" width="2" height="2" fill="#c4c4c4"/><rect x="1" y="106" width="2" height="2" fill="#fff"/><rect x="0" y="110" width="2" height="2" fill="#c4c4c4"/><rect x="1" y="111" width="2" height="2" fill="#fff"/><rect x="0" y="115" width="2" height="2" fill="#c4c4c4"/><rect x="1" y="116" width="2" height="2" fill="#fff"/><rect x="0" y="120" width="2" height="2" fill="#c4c4c4"/><rect x="1" y="121" width="2" height="2" fill="#fff"/><rect x="0" y="125" width="2" height="2" fill="#c4c4c4"/><rect x="1" y="126" width="2" height="2" fill="#fff"/><rect x="0" y="130" width="2" height="2" fill="#c4c4c4"/><rect x="1" y="131" width="2" height="2" fill="#fff"/><rect x="0" y="135" width="2" height="2" fill="#c4c4c4"/><rect x="1" y="136" width="2" height="2" fill="#fff"/><rect x="0" y="140" width="2" height="2" fill="#c4c4c4"/><rect x="1" y="141" width="2" height="2" fill="#fff"/><rect x="0" y="145" width="2" height="2" fill="#c4c4c4"/><rect x="1" y="146" width="2" height="2" fill="#fff"/><rect x="0" y="150" width="2" height="2" fill="#c4c4c4"/><rect x="1" y="151" width="2" height="2" fill="#fff"/><rect x="0" y="155" width="2" height="2" fill="#c4c4c4"/><rect x="1" y="156" width="2" height="2" fill="#fff"/><rect x="0" y="160" width="2" height="2" fill="#c4c4c4"/><rect x="1" y="161" width="2" height="2" fill="#fff"/><rect x="0" y="165" width="2" height="2" fill="#c4c4c4"/><rect x="1" y="166" width="2" height="2" fill="#fff"/><rect x="0" y="170" width="2" height="2" fill="#c4c4c4"/><rect x="1" y="171" width="2" height="2" fill="#fff"/><rect x="0" y="175" width="2" height="2" fill="#c4c4c4"/><rect x="1" y="176" width="2" height="2" fill="#fff"/><rect x="0" y="180" width="2" height="2" fill="#c4c4c4"/><rect x="1" y="181" width="2" height="2" fill="#fff"/></svg>
<div style="left:336px;top:329px;width:729px;height:2px;background:linear-gradient(#a0a0a0 50%,#fff 50%)"></div>
<span class="t" style="left:335.6px;top:344px;font-size:11px;letter-spacing:-0.24px;">Unit</span>
<div class="btn" style="left:426px;top:339px;width:638px;height:20px;"></div><div style="left:1046px;top:340px;width:1px;height:18px;background:#c4c4c4"></div><svg class="i" style="left:1051px;top:347px;" width="7" height="4" viewBox="0 0 7 4"><path d="M0 0h7l-3.5 4z" fill="#000"/></svg><span class="t" style="left:429.7px;top:344px;font-size:11px;letter-spacing:-0.36px;">Millimeter</span>
<span class="t" style="left:336.5px;top:368px;font-size:11px;letter-spacing:-0.11px;">Transparency 0%</span>
<div style="left:432px;top:370px;width:633px;height:4px;border:1px solid #a8a8a8;border-radius:2px;background:#e7eaea"></div><svg class="i" style="left:426px;top:365px;" width="11" height="15" viewBox="0 0 11 15"><path d="M0.5 2.5q0 -2 2 -2h6q2 0 2 2v8l-5 4l-5 -4z" fill="#f4f4f4" stroke="#8a8a8a"/></svg>
<span class="t" style="left:335.7px;top:392px;font-size:11px;letter-spacing:-0.47px;">Color</span>
<div class="btn" style="left:426px;top:386px;width:627px;height:22px;border-color:#8c8c8c"></div>
<div style="left:431px;top:389px;width:617px;height:16px;background:#b0620e;border-radius:2px"></div>
<div class="btn" style="left:1053px;top:386px;width:12px;height:22px;border-color:#8c8c8c"></div>
<svg class="i" style="left:1055px;top:395px;" width="8" height="5" viewBox="0 0 8 5"><path d="M0 0h8l-4.0 5z" fill="#000"/></svg>
<span class="t" style="left:335.6px;top:425px;font-size:10.5px;letter-spacing:-0.31px;">Size</span>
<div class="fld" style="left:384px;top:419px;width:644px;height:25px;"></div><div class="btn" style="left:1011px;top:420px;width:16px;height:11px;border-radius:0 2px 0 0;border-width:0 0 0 1px;border-style:solid;border-color:#c4c4c4"></div><div class="btn" style="left:1011px;top:431px;width:16px;height:12px;border-radius:0 0 2px 0;border-width:1px 0 0 1px;border-style:solid;border-color:#c4c4c4"></div><svg class="i" style="left:1015px;top:424px;" width="7" height="4" viewBox="0 0 7 4"><path d="M0 4h7l-3.5 -4z" fill="#000"/></svg><svg class="i" style="left:1015px;top:435px;" width="7" height="4" viewBox="0 0 7 4"><path d="M0 0h7l-3.5 4z" fill="#000"/></svg><span class="t" style="left:389.7px;top:427px;font-size:11px;letter-spacing:-0.13px;">2.00000</span>
<span class="t" style="left:335.7px;top:460px;font-size:11px;letter-spacing:0.15px;">Rotation</span>
<div class="fld" style="left:384px;top:453px;width:644px;height:24px;"></div><div class="btn" style="left:1011px;top:454px;width:16px;height:11px;border-radius:0 2px 0 0;border-width:0 0 0 1px;border-style:solid;border-color:#c4c4c4"></div><div class="btn" style="left:1011px;top:465px;width:16px;height:11px;border-radius:0 0 2px 0;border-width:1px 0 0 1px;border-style:solid;border-color:#c4c4c4"></div><svg class="i" style="left:1015px;top:458px;" width="7" height="4" viewBox="0 0 7 4"><path d="M0 4h7l-3.5 -4z" fill="#000"/></svg><svg class="i" style="left:1015px;top:468px;" width="7" height="4" viewBox="0 0 7 4"><path d="M0 0h7l-3.5 4z" fill="#000"/></svg><span class="t" style="left:390.5px;top:460px;font-size:11px;letter-spacing:0.29px;">0.00 °</span>
<div style="left:336px;top:482px;width:729px;height:2px;background:linear-gradient(#a0a0a0 50%,#fff 50%)"></div>
<div style="left:335px;top:490px;width:731px;height:8px;overflow:hidden"><div class="fld" style="left:85px;top:0px;width:567px;height:20px;"></div><div class="btn" style="left:635px;top:1px;width:16px;height:18px;border-width:0 0 0 1px;border-radius:0 2px 2px 0"></div><div class="btn" style="left:655px;top:0px;width:75px;height:22px;"></div><div style="left:2px;top:7px;width:4px;height:1px;background:#3a3a4a"></div><div style="left:21px;top:7px;width:1px;height:1px;background:#3a3a4a"></div><div style="left:33px;top:7px;width:1px;height:1px;background:#3a3a4a"></div><div style="left:43px;top:7px;width:1px;height:1px;background:#3a3a4a"></div><div style="left:662px;top:7px;width:5px;height:1px;background:#3a3a4a"></div><div style="left:690px;top:7px;width:1px;height:1px;background:#3a3a4a"></div><div style="left:695px;top:7px;width:1px;height:1px;background:#3a3a4a"></div><div style="left:697px;top:7px;width:1px;height:1px;background:#3a3a4a"></div></div>
<svg class="i" style="left:338px;top:515px;" width="12" height="7" viewBox="0 0 12 7"><path d="M0 0h11l-5.5 7z" fill="#3c3c3c"/></svg>
<span class="t" style="left:356.7px;top:513px;font-size:11px;font-weight:bold;color:#1e1e1e;letter-spacing:0.48px;">Layer rendering</span>
<div style="left:454px;top:515px;width:627px;height:1px;background:#8c8c8c"></div>
<span class="t" style="left:335.7px;top:536px;font-size:11px;letter-spacing:-0.03px;">Layer transparency</span>
<div style="left:527px;top:538px;width:498px;height:4px;border:1px solid #a8a8a8;border-radius:2px;background:#e7eaea"></div><svg class="i" style="left:522px;top:533px;" width="11" height="15" viewBox="0 0 11 15"><path d="M0.5 2.5q0 -2 2 -2h6q2 0 2 2v8l-5 4l-5 -4z" fill="#f4f4f4" stroke="#8a8a8a"/></svg>
<div class="fld" style="left:1032px;top:531px;width:46px;height:19px;"></div>
<div class="btn" style="left:1061px;top:532px;width:16px;height:9px;border-width:0 0 0 1px;border-radius:0 2px 0 0"></div>
<div class="btn" style="left:1061px;top:541px;width:16px;height:8px;border-width:0 0 0 1px;border-radius:0 0 2px 0"></div>
<svg class="i" style="left:1065px;top:534px;" width="7" height="4" viewBox="0 0 7 4"><path d="M0 4h7l-3.5 -4z" fill="#000"/></svg>
<svg class="i" style="left:1065px;top:543px;" width="7" height="4" viewBox="0 0 7 4"><path d="M0 0h7l-3.5 4z" fill="#000"/></svg>
<span class="t" style="left:1037.5px;top:536px;font-size:11px;">0</span>
<span class="t" style="left:335.7px;top:562px;font-size:11px;letter-spacing:-0.22px;">Layer blending mode</span>
<div class="btn" style="left:522px;top:557px;width:181px;height:20px;"></div><div style="left:685px;top:558px;width:1px;height:18px;background:#c4c4c4"></div><svg class="i" style="left:690px;top:565px;" width="7" height="4" viewBox="0 0 7 4"><path d="M0 0h7l-3.5 4z" fill="#000"/></svg><span class="t" style="left:525.7px;top:562px;font-size:11px;letter-spacing:-0.38px;">Normal</span>
<span class="t" style="left:335.7px;top:589px;font-size:11px;letter-spacing:-0.19px;">Feature blending mode</span>
<div class="btn" style="left:522px;top:584px;width:181px;height:20px;"></div><div style="left:685px;top:585px;width:1px;height:18px;background:#c4c4c4"></div><svg class="i" style="left:690px;top:592px;" width="7" height="4" viewBox="0 0 7 4"><path d="M0 0h7l-3.5 4z" fill="#000"/></svg><span class="t" style="left:525.7px;top:589px;font-size:11px;letter-spacing:-0.38px;">Normal</span>
<div style="left:336px;top:616px;width:13px;height:13px;border:1px solid #b0b0b0;background:linear-gradient(135deg,#fff,#f1f1f1);border-radius:2px"></div>
<span class="t" style="left:352.7px;top:618px;font-size:11px;letter-spacing:0.10px;">Draw effects</span>
<div style="left:336px;top:647px;width:13px;height:13px;border:1px solid #b0b0b0;background:linear-gradient(135deg,#fff,#f1f1f1);border-radius:2px"></div>
<span class="t" style="left:352.7px;top:649px;font-size:11px;letter-spacing:0.01px;">Control feature rendering order</span>
<div class="btn" style="left:1052px;top:611px;width:26px;height:25px;border-color:#8e8e8e"></div>
<div class="btn" style="left:1052px;top:642px;width:26px;height:25px;border-color:#8e8e8e"></div>
<div class="btn" style="left:336px;top:682px;width:75px;height:23px;"></div>
<span class="t" style="left:353.7px;top:689px;font-size:11px;letter-spacing:-0.12px;">Style</span>
<svg class="i" style="left:400px;top:691px;" width="5" height="3" viewBox="0 0 5 3"><path d="M0 0h5l-2.5 3z" fill="#000"/></svg>
<div class="btn def" style="left:751px;top:682px;width:75px;height:23px;"></div>
<span class="t" style="left:780.9px;top:689px;font-size:10.5px;letter-spacing:-1.29px;">OK</span>
<div class="btn" style="left:836px;top:682px;width:75px;height:23px;"></div>
<span class="t" style="left:856.0px;top:689px;font-size:11px;letter-spacing:-0.28px;">Cancel</span>
<div class="btn" style="left:921px;top:682px;width:75px;height:23px;"></div>
<span class="t" style="left:945.4px;top:689px;font-size:11px;letter-spacing:-0.36px;">Apply</span>
<div class="btn" style="left:1006px;top:682px;width:75px;height:23px;"></div>
<span class="t" style="left:1032.1px;top:689px;font-size:11px;letter-spacing:-0.45px;">Help</span>
<div class="btn" style="left:336px;top:156px;width:745px;height:22px;border-color:#a0a0a0;background:linear-gradient(#e8e8e8,#dadada)"></div>
<div style="left:1065px;top:157px;width:1px;height:20px;background:#b8b8b8"></div>
<svg class="i" style="left:1070px;top:166px;" width="7" height="4" viewBox="0 0 7 4"><path d="M0 0h7l-3.5 4z" fill="#000"/></svg>
<span class="t" style="left:361.0px;top:163px;font-size:11px;letter-spacing:-0.33px;">Single symbol</span>
<div style="left:336px;top:178px;width:745px;height:115px;background:#fff;border:1px solid #7a7a7a;border-top-color:#b0b0b0;box-shadow:2px 2px 2px rgba(0,0,0,.35)"></div>
<div style="left:338px;top:275px;width:741px;height:16px;background:#0078d7"></div>
<div style="left:360px;top:275px;width:719px;height:16px;border:1px dotted #f0a050"></div>
<span class="t" style="left:362.4px;top:183px;font-size:11px;letter-spacing:-0.35px;">No symbols</span>
<span class="t" style="left:362.4px;top:199px;font-size:11px;letter-spacing:-0.36px;">Single symbol</span>
<span class="t" style="left:362.9px;top:215px;font-size:11px;letter-spacing:-0.24px;">Categorized</span>
<span class="t" style="left:362.4px;top:231px;font-size:11px;letter-spacing:-0.07px;">Graduated</span>
<span class="t" style="left:362.4px;top:247px;font-size:11px;letter-spacing:-0.29px;">Rule-based</span>
<span class="t" style="left:362.4px;top:263px;font-size:11px;letter-spacing:-0.21px;">Point displacement</span>
<span class="t" style="left:362.4px;top:279px;font-size:11px;color:#fff;letter-spacing:-0.26px;">Heatmap</span>
<svg class="i" style="left:185px;top:158px;" width="24" height="24" viewBox="0 0 24 24"><path d="M1.5 1.200l10 10.5" stroke="#e4e4e4" stroke-width="1.5" stroke-linecap="round"/><path d="M10.5 12.500l-6.5 8" stroke="#1f3f78" stroke-width="4.6" stroke-linecap="round"/><path d="M10.2 12.200l-6 7.5" stroke="#3f6fb8" stroke-width="2.2" stroke-linecap="round"/><path d="M10.5 1.500q7 -2 11 5.500q1.5 1.5 1.5 3l-2.5 1.500l-1.5 -2.500l-3.5 -.5l-1.5 -2.500q-2 -3 -5.5 -3z" fill="#2e3436" stroke="#1a1a1a" stroke-width="0.5"/><path d="M15.5 8l-3 3.5" stroke="#e8e8e8" stroke-width="2.5"/><path d="M12 12l9.5 9.5" stroke="#d45500" stroke-width="4.4" stroke-linecap="round"/><path d="M12.3 11.700l9 9" stroke="#ff7f0e" stroke-width="2.2" stroke-linecap="round" stroke-dasharray="1.5 0.8"/></svg>
<svg class="i" style="left:185px;top:192px;" width="24" height="24" viewBox="0 0 24 24"><path d="M5 3l13.5 4l-2 4.500l-14 -3.500z" fill="#b9d17e"/><path d="M2.5 8l14 3.500l-1.5 4l-14.5 -3.500z" fill="#6aa3dc"/><path d="M0.5 12l14.5 3.500l-1.5 6l-11.5 -4.500z" fill="#c4527c"/><path d="M26 3.500l-7 9" stroke="#9c9572" stroke-width="3" stroke-linecap="round"/><path d="M14.5 9.500l7.5 6.500l-7 7l-7.5 -7z" fill="#a3a387" stroke="#8a8468" stroke-width="0.8"/><path d="M14.5 9.500l7.5 6.500l-1.5 1.500l-8 -6z" fill="#8f8a66"/></svg>
<svg class="i" style="left:185px;top:226px;" width="24" height="24" viewBox="0 0 24 24"><path d="M5.5 6.500h18.500v12.500h-18.500l-5 -6.200z" fill="#f8d830" stroke="#cfa30a" stroke-width="1.2" stroke-linejoin="round"/><path d="M6 7.800h17" stroke="#fdf0a0" stroke-width="1.2"/><text x="5.6" y="16.3" font-size="10.5" font-weight="bold" fill="#2a2a2a" font-family="Liberation Sans,sans-serif" letter-spacing="0.2">abc</text></svg>
<svg class="i" style="left:185px;top:260px;" width="24" height="24" viewBox="0 0 24 24"><rect x="1" y="3.5" width="22" height="19.5" fill="#dcdcd6" stroke="#bdbdb5" stroke-width="0.6"/><rect x="1" y="3.5" width="22" height="3.2" fill="#5b8cc4"/><path d="M2.5 8.5h3.500M7.5 8.5h7M16 8.5h6" stroke="#a9a9a1" stroke-width="1"/><path d="M2.5 11.5h3.500M7.5 11.5h7M16 11.5h6" stroke="#a9a9a1" stroke-width="1"/><path d="M2.5 14.5h3.500M7.5 14.5h7M16 14.5h6" stroke="#a9a9a1" stroke-width="1"/><path d="M2.5 17.5h3.500M7.5 17.5h7M16 17.5h6" stroke="#a9a9a1" stroke-width="1"/><path d="M2.5 20.5h3.500M7.5 20.5h7M16 20.5h6" stroke="#a9a9a1" stroke-width="1"/></svg>
<svg class="i" style="left:185px;top:294px;" width="24" height="24" viewBox="0 0 24 24"><path d="M21.5 2l-8.5 9.5" stroke="#d9962e" stroke-width="3" stroke-linecap="round"/><path d="M7 8l8.5 6l-7.5 9.500l-8 -8.500z" fill="#e2a64a" stroke="#c88a2a" stroke-width="0.8"/><path d="M7 8l8.5 6l-1.2 2l-9 -6z" fill="#d08a20"/><path d="M3 14l6 6M5 12l6 6M7 11l5 5" stroke="#f0c070" stroke-width="0.6" opacity="0.7"/></svg>
<svg class="i" style="left:185px;top:328px;" width="24" height="24" viewBox="0 0 24 24"><path d="M5 0.500h14q4.5 0 4.5 4.500v7q0 4.5 -4.5 4.500h-6.500q-2 4 -6.5 5.500q2 -2.5 2 -5.500h-3q-4.5 0 -4.5 -4.500v-7q0 -4.5 4.5 -4.500z" fill="#e6d98c" stroke="#cbb64a" stroke-width="1"/><path d="M3.5 9q-.5 -5.5 5 -5.500h3" fill="none" stroke="#fbf6dc" stroke-width="1.5" stroke-linecap="round"/></svg>
<svg class="i" style="left:185px;top:362px;" width="24" height="24" viewBox="0 0 24 24"><path d="M24.8 7.8L24.8 10.4L22.8 11.3L21.9 13.3L22.8 15.4L20.9 17.3L18.8 16.4L16.8 17.3L15.9 19.3L13.3 19.3L12.4 17.3L10.4 16.4L8.3 17.3L6.4 15.4L7.3 13.3L6.4 11.3L4.4 10.4L4.4 7.8L6.4 6.9L7.3 4.9L6.4 2.8L8.3 0.9L10.4 1.8L12.4 0.9L13.3 -1.1L15.9 -1.1L16.8 0.9L18.8 1.8L20.9 0.9L22.8 2.8L21.9 4.9L22.8 6.9z" fill="#efefef" stroke="#c4c4c4" stroke-width="0.8" stroke-linejoin="round"/><circle cx="14.6" cy="9.1" r="6.2" fill="#5b8cc4" stroke="#4a78ae" stroke-width="0.6"/><path d="M12.5 6.200l5.5 2.900l-5.5 2.900z" fill="#fff"/><path d="M8.1 19.6L8.1 20.8L7.1 21.2L6.8 22.1L7.1 23.0L6.3 23.8L5.4 23.5L4.5 23.8L4.1 24.8L2.9 24.8L2.5 23.8L1.6 23.5L0.7 23.8L-0.1 23.0L0.2 22.1L-0.1 21.2L-1.1 20.8L-1.1 19.6L-0.1 19.2L0.2 18.3L-0.1 17.4L0.7 16.6L1.6 16.9L2.5 16.6L2.9 15.6L4.1 15.6L4.5 16.6L5.4 16.9L6.3 16.6L7.1 17.4L6.8 18.3L7.1 19.2z" fill="#efefef" stroke="#c4c4c4" stroke-width="0.8" stroke-linejoin="round"/><circle cx="3.5" cy="20.2" r="2.7" fill="#5b8cc4"/></svg>
<svg class="i" style="left:185px;top:396px;" width="24" height="24" viewBox="0 0 24 24"><circle cx="1.5" cy="11.8" r="3.6" fill="url(#gInfo)" stroke="#2f4e78" stroke-width="0.6"/><path d="M6 11.800l17 -11.500l-.5 7h3.500v9.500h-3.500l.5 7z" fill="url(#gBlue)" stroke="#2f5a93" stroke-width="0.7" stroke-linejoin="round"/><path d="M6.5 11.800h19" stroke="#35609a" stroke-width="0.6"/></svg>
<svg class="i" style="left:185px;top:430px;" width="24" height="24" viewBox="0 0 24 24"><rect x="0.5" y="2.5" width="2.5" height="16" fill="#eee" stroke="#bdbdbd" stroke-width="0.6"/><rect x="3" y="3.5" width="22" height="14" fill="#efefed" stroke="#cfcfcf" stroke-width="0.8"/><path d="M5 6l4 -1l3 2l6 -1l5 2l-1 4l-4 1l-2 3l-5 -1l-5 .500z" fill="#d4d4d0" opacity="0.8"/><path d="M11 10.500v-5.500a5.5 5.5 0 0 0 0 11z" fill="#f6e05a"/><path d="M11 10.500v-5.500a5.5 5.5 0 0 1 5.5 5.500z" fill="#5b8cd4"/><path d="M11 10.500h5.500a5.5 5.5 0 0 1 -5.5 5.500z" fill="#e8333a"/></svg>
<svg class="i" style="left:185px;top:464px;" width="24" height="24" viewBox="0 0 24 24"><circle cx="12.1" cy="11.8" r="12.3" fill="url(#gInfo)" stroke="#4a78ae" stroke-width="0.6"/><text x="11.6" y="20" font-size="24" font-weight="bold" font-style="italic" text-anchor="middle" fill="#fff" font-family="Liberation Serif,serif">i</text></svg>
<svg class="i" style="left:185px;top:498px;" width="24" height="24" viewBox="0 0 24 24"><text x="3.5" y="21.5" font-size="37" fill="#6f3a78" stroke="#6f3a78" stroke-width="0.5" font-family="Liberation Serif,serif">ε</text></svg>
<svg class="i" style="left:185px;top:532px;" width="24" height="24" viewBox="0 0 24 24"><rect x="1.7" y="1.7" width="5.2" height="5.2" fill="#ffcb05" stroke="#f0a000" stroke-width="0.8"/><rect x="1.7" y="8.7" width="5.2" height="5.2" fill="#f94d00" stroke="#d43c00" stroke-width="0.8"/><rect x="1.7" y="15.7" width="5.2" height="5.2" fill="#00c060" stroke="#007a3d" stroke-width="0.8"/><path d="M8.5 5.900h7.300M8.5 13h10.400M8.5 20h4.5" stroke="#b4b4b4" stroke-width="1.9"/></svg>
<svg class="i" style="left:343px;top:160px;" width="16" height="16" viewBox="0 0 16 16"><rect x="2" y="1.5" width="11" height="3.2" rx="0.3" fill="#00b050" stroke="#006030" stroke-width="1"/><rect x="4" y="6.5" width="11" height="3.2" rx="0.3" fill="#00b050" stroke="#006030" stroke-width="1"/><rect x="2" y="11.5" width="11" height="3.2" rx="0.3" fill="#00b050" stroke="#006030" stroke-width="1"/></svg>
<svg class="i" style="left:341px;top:179px;" width="16" height="16" viewBox="0 0 16 16"><path d="M2 1.5h11" stroke="#c8c8c8" stroke-width="0.8" stroke-dasharray="1 1"/><path d="M2 4.7h11" stroke="#c8c8c8" stroke-width="0.8" stroke-dasharray="1 1"/><path d="M4 6.5h11" stroke="#c8c8c8" stroke-width="0.8" stroke-dasharray="1 1"/><path d="M4 9.7h11" stroke="#c8c8c8" stroke-width="0.8" stroke-dasharray="1 1"/><path d="M2 11.5h11" stroke="#c8c8c8" stroke-width="0.8" stroke-dasharray="1 1"/><path d="M2 14.7h11" stroke="#c8c8c8" stroke-width="0.8" stroke-dasharray="1 1"/><path d="M2 2l3 2.500M13 2l-3 2.500M4.5 7.500l2 2M14.5 7.500l-2 2" stroke="#d4d4d4" stroke-width="0.8" stroke-dasharray="1 1"/></svg>
<svg class="i" style="left:341px;top:195px;" width="16" height="16" viewBox="0 0 16 16"><rect x="2" y="1.5" width="11" height="3.2" rx="0.3" fill="#00b050" stroke="#006030" stroke-width="1"/><rect x="4" y="6.5" width="11" height="3.2" rx="0.3" fill="#00b050" stroke="#006030" stroke-width="1"/><rect x="2" y="11.5" width="11" height="3.2" rx="0.3" fill="#00b050" stroke="#006030" stroke-width="1"/></svg>
<svg class="i" style="left:341px;top:211px;" width="16" height="16" viewBox="0 0 16 16"><rect x="2" y="1.5" width="11" height="3.2" rx="0.3" fill="#0a9be0" stroke="#1f5fd8" stroke-width="1"/><rect x="4" y="6.5" width="11" height="3.2" rx="0.3" fill="#00b050" stroke="#006030" stroke-width="1"/><rect x="2" y="11.5" width="11" height="3.2" rx="0.3" fill="#a80000" stroke="#7a0000" stroke-width="1"/></svg>
<svg class="i" style="left:341px;top:227px;" width="16" height="16" viewBox="0 0 16 16"><rect x="2" y="1.5" width="11" height="3.2" rx="0.3" fill="#ffd400" stroke="#f09a00" stroke-width="1"/><rect x="4" y="6.5" width="11" height="3.2" rx="0.3" fill="#f84e00" stroke="#d83a00" stroke-width="1"/><rect x="2" y="11.5" width="11" height="3.2" rx="0.3" fill="#a80000" stroke="#7a0000" stroke-width="1"/></svg>
<svg class="i" style="left:341px;top:243px;" width="16" height="16" viewBox="0 0 16 16"><path d="M2 4v8.500h2.5" fill="none" stroke="#8a8a8a" stroke-width="0.8"/><rect x="1.3" y="0.8" width="10.5" height="3" rx="0.8" fill="#fff" stroke="#8a8a8a" stroke-width="0.9"/><rect x="4" y="6" width="11" height="3.2" rx="0.3" fill="#00b050" stroke="#006030" stroke-width="1"/><rect x="4" y="11" width="11" height="3.2" rx="0.3" fill="#00b050" stroke="#006030" stroke-width="1"/></svg>
<svg class="i" style="left:341px;top:259px;" width="16" height="16" viewBox="0 0 16 16"><circle cx="8" cy="7.8" r="6.6" fill="#fff" stroke="#4a4a4a" stroke-width="0.7"/><rect x="5.8" y="5.6" width="4.4" height="4.4" rx="1.2" transform="rotate(45 8 7.8)" fill="#f84e00"/><rect x="6.9" y="0.2" width="2.2" height="2.2" transform="rotate(45 8 1.3)" fill="#0a7a44"/><rect x="6.9" y="13.3" width="2.2" height="2.2" transform="rotate(45 8 14.4)" fill="#0a7a44"/></svg>
<svg class="i" style="left:341px;top:275px;" width="16" height="16" viewBox="0 0 16 16"><circle cx="8" cy="8" r="6" fill="url(#gHeat)"/></svg>
<svg class="i" style="left:343.5px;top:300px;" width="15" height="15" viewBox="0 0 15 15"><path d="M5.5 1.500h4v4h4v4h-4v4h-4v-4h-4v-4h4z" fill="#fafafa" stroke="#3d8a3d" stroke-width="1.4" stroke-linejoin="round"/></svg>
<svg class="i" style="left:379.5px;top:300px;" width="15" height="15" viewBox="0 0 15 15"><rect x="0.8" y="5" width="13.5" height="5" rx="0.8" fill="#fafafa" stroke="#a8a8a8" stroke-width="1.3"/></svg>
<svg class="i" style="left:415.5px;top:300px;" width="15" height="15" viewBox="0 0 15 15"><path d="M4.5 7v-2.500q0 -3.5 3.5 -3.500t3.5 3.500v.500" fill="none" stroke="#c4c4c4" stroke-width="1.6"/><rect x="1.5" y="7.5" width="11" height="7" rx="1.5" fill="#d8d8d8" stroke="#bdbdbd" stroke-width="1"/></svg>
<svg class="i" style="left:451.5px;top:300px;" width="15" height="15" viewBox="0 0 15 15"><rect x="0.8" y="2.5" width="10.5" height="11" fill="#d4d4d4" stroke="#b4b4b4" stroke-width="1"/><rect x="3" y="0.8" width="10.5" height="11" fill="#fafafa" stroke="#b4b4b4" stroke-width="1.2"/><rect x="9.5" y="9" width="4.5" height="4.5" fill="#e4e4e4" stroke="#c8c8c8" stroke-width="0.6"/></svg>
<svg class="i" style="left:487.5px;top:300px;" width="15" height="15" viewBox="0 0 15 15"><path d="M0.8 12.500l6.5 -10.500l6.5 10.500z" fill="#b9b9b9" stroke="#a8a8a8" stroke-width="0.8" stroke-linejoin="round"/></svg>
<svg class="i" style="left:523.5px;top:300px;" width="15" height="15" viewBox="0 0 15 15"><path d="M0.8 2l6.5 10.500l6.5 -10.500z" fill="#b9b9b9" stroke="#a8a8a8" stroke-width="0.8" stroke-linejoin="round"/></svg>
<svg class="i" style="left:1038px;top:424px;" width="24" height="17" viewBox="0 0 24 17"><path d="M6 1.500l-5.5 5.500l5.5 5.500z" fill="#9a9a9a"/><rect x="5.5" y="0.5" width="12.5" height="15" fill="#fafafa" stroke="#8a8a8a" stroke-width="1"/><path d="M8 4.500h7.5" stroke="#8a8a8a" stroke-width="1.8"/><path d="M8 11.500h6" stroke="#6a6a6a" stroke-width="1"/><path d="M13.5 10.500h9.500l-4.75 5z" fill="#000"/></svg>
<svg class="i" style="left:1038px;top:457px;" width="24" height="17" viewBox="0 0 24 17"><path d="M6 1.500l-5.5 5.500l5.5 5.500z" fill="#9a9a9a"/><rect x="5.5" y="0.5" width="12.5" height="15" fill="#fafafa" stroke="#8a8a8a" stroke-width="1"/><path d="M8 4.500h7.5" stroke="#8a8a8a" stroke-width="1.8"/><path d="M8 11.500h6" stroke="#6a6a6a" stroke-width="1"/><path d="M13.5 10.500h9.500l-4.75 5z" fill="#000"/></svg>
<svg class="i" style="left:1056px;top:615px;" width="18" height="17" viewBox="0 0 18 17"><path d="M9 1.500l2.3 5l5.2 .600l-3.9 3.600l1.1 5.300l-4.7 -2.700l-4.7 2.700l1.1 -5.300l-3.9 -3.600l5.2 -.600z" fill="#c4c4c4" stroke="#b0b0b0" stroke-width="0.9" stroke-linejoin="round"/><path d="M14.5 10v3.500M14.5 11.500q1 -1.5 2 -1" fill="none" stroke="#a8a8a8" stroke-width="1"/></svg>
<svg class="i" style="left:1057px;top:647px;" width="17" height="15" viewBox="0 0 17 15"><text x="0.5" y="6.8" font-size="7.5" font-weight="bold" fill="#a8a8a8" font-family="Liberation Sans,sans-serif">A</text><text x="0.7" y="14.3" font-size="7.5" font-weight="bold" fill="#a8a8a8" font-family="Liberation Sans,sans-serif">Z</text><path d="M11.5 0.500v9h-3.300l4.3 5l4.3 -5h-3.300v-9z" fill="#b4b4b4"/></svg>
<svg class="i" style="left:188px;top:129px;" width="16" height="17" viewBox="0 0 16 17"><text x="6.9" y="12.2" font-size="15.5" font-weight="bold" text-anchor="middle" fill="#e4ec6c" stroke="#c2d040" stroke-width="0.5" font-family="Liberation Serif,serif">Q</text><path d="M2.5 12l7 -8" stroke="#1f8a1f" stroke-width="1.4"/><path d="M12.8 0.3l-1.3 4.800l-3.4 -2.900zM0.6 13.200l3.2 -1.600l-1 2.900z" fill="#176f17"/></svg>
</div>
<!-- Windows taskbar -->
<div class="taskbar" style="left:0;top:0">
<div style="left:0px;top:727px;width:1366px;height:1px;background:#e6e6e6"></div>
<div style="left:0px;top:728px;width:1366px;height:40px;background:#151515"></div>
<div style="left:0px;top:728px;width:48px;height:40px;background:#0b0b0b"></div>
<div style="left:48px;top:728px;width:344px;height:40px;background:#343434"></div>
<div style="left:1000px;top:728px;width:366px;height:40px;background:linear-gradient(90deg,#151515,#0b0c0a 25%,#0b0c0a)"></div>
<span class="t" style="left:85.2px;top:741px;font-size:15px;color:#b2b2b2;letter-spacing:-0.21px;">Ask me anything</span>
<div style="left:786px;top:728px;width:48px;height:40px;background:#4a4a4a"></div>
<div style="left:496px;top:766px;width:31px;height:2px;background:#f4917a"></div>
<div style="left:643px;top:766px;width:40px;height:2px;background:#f4917a"></div>
<div style="left:741px;top:766px;width:31px;height:2px;background:#f4917a"></div>
<div style="left:786px;top:766px;width:48px;height:2px;background:#f4917a"></div>
<div style="left:528px;top:766px;width:8px;height:2px;background:#c8786a"></div>
<div style="left:773px;top:766px;width:8px;height:2px;background:#c8786a"></div>
<span class="t" style="left:1256.7px;top:733px;font-size:12px;color:#fff;letter-spacing:-0.28px;">10:34 AM</span>
<span class="t" style="left:1252.7px;top:751px;font-size:12px;color:#fff;letter-spacing:-0.32px;">10/13/2016</span>
<div style="left:1361px;top:728px;width:1px;height:40px;background:#5a5a5a"></div>
<svg class="i" style="left:16px;top:740px;" width="17" height="17" viewBox="0 0 17 17"><path d="M0 2.400l6.7 -0.900v6.400h-6.700zM7.5 1.400l9 -1.300v7.800h-9zM0 8.700h6.700v6.400l-6.7 -0.900zM7.5 8.700h9v7.800l-9 -1.300z" fill="#fff"/></svg>
<svg class="i" style="left:57px;top:737px;" width="22" height="22" viewBox="0 0 22 22"><circle cx="11" cy="11" r="9.3" fill="none" stroke="#fff" stroke-width="2.3"/><circle cx="11" cy="11" r="10.6" fill="none" stroke="#9a9a9a" stroke-width="0.6"/></svg>
<svg class="i" style="left:365px;top:740px;" width="13" height="17" viewBox="0 0 13 17"><rect x="3.5" y="0.5" width="6" height="10.5" rx="1.2" fill="none" stroke="#9c9c9c" stroke-width="1.1"/><path d="M1 7.500v2q0 3.5 5.5 3.500t5.5 -3.500v-2M6.5 13v3M3.5 16h6" fill="none" stroke="#9c9c9c" stroke-width="1"/></svg>
<svg class="i" style="left:405px;top:740px;" width="22" height="16" viewBox="0 0 22 16"><rect x="5" y="1" width="11.5" height="14" fill="none" stroke="#fff" stroke-width="1.3"/><path d="M3.5 3.500h-2.500v9h2.500M18 3.500h2.500v9h-2.5" fill="none" stroke="#fff" stroke-width="1.3"/></svg>
<svg class="i" style="left:456px;top:736px;" width="22" height="24" viewBox="0 0 22 24"><path d="M0.8 11.500q1 -10 10.5 -10.500q9.5 .500 9.5 10.500v2.500h-14q.500 4.5 6 4.500q3.5 0 7 -1.800v4.500q-3.5 1.8 -8 1.800q-9.5 -.500 -10 -9.300q.500 -5 5 -7.300q-3.5 .500 -6 5.100zM7 10h8.500q-.300 -4.3 -4.2 -4.300q-3.8 0 -4.3 4.300z" fill="#0a7ad6"/></svg>
<svg class="i" style="left:505px;top:738px;" width="22" height="20" viewBox="0 0 22 20"><path d="M0.5 2q0 -1 1 -1h6l1.5 1.500h12q1 0 1 1v14.500q0 1 -1 1h-19.500q-1 0 -1 -1z" fill="#fbd565"/><path d="M0.5 5.500h21.500v12.500q0 1 -1 1h-19.500q-1 0 -1 -1z" fill="#fde7a0"/><path d="M2 1.800h4.5" stroke="#3eaee8" stroke-width="1"/><path d="M5 19v-6.500q0 -1 1 -1h10q1 0 1 1v6.500h-3.500v-4h-5v4z" fill="#3eaee8"/></svg>
<svg class="i" style="left:553px;top:735px;" width="23" height="26" viewBox="0 0 23 26"><path d="M7 6.500q.500 -5 5 -5.200q4 .300 4.5 4.5" fill="none" stroke="#fff" stroke-width="1.3"/><path d="M1 6.800l21 -2.300v19.500l-21 -2.700z" fill="#fff"/><path d="M4.5 10.800l5.5 -.600v4.500h-5.500zM11 10.100l7 -.800v5.400h-7zM4.5 15.700h5.500v4.500l-5.5 -.600zM11 15.700h7v5.500l-7 -.900z" fill="#161616"/></svg>
<svg class="i" style="left:602px;top:739px;" width="24" height="17" viewBox="0 0 24 17"><ellipse cx="12" cy="7.8" rx="3" ry="5.8" transform="rotate(-66 12 14.5)" fill="#fcb711"/><ellipse cx="12" cy="7.8" rx="3" ry="5.8" transform="rotate(-40 12 14.5)" fill="#f37021"/><ellipse cx="12" cy="7.8" rx="3" ry="5.8" transform="rotate(-13 12 14.5)" fill="#cc004c"/><ellipse cx="12" cy="7.8" rx="3" ry="5.8" transform="rotate(13 12 14.5)" fill="#6460aa"/><ellipse cx="12" cy="7.8" rx="3" ry="5.8" transform="rotate(40 12 14.5)" fill="#0089d0"/><ellipse cx="12" cy="7.8" rx="3" ry="5.8" transform="rotate(66 12 14.5)" fill="#0db14b"/><path d="M12 7.5l1.6 8h-3.2z" fill="#fff"/></svg>
<svg class="i" style="left:652px;top:737px;" width="23" height="23" viewBox="0 0 23 23"><circle cx="11" cy="11" r="10.8" fill="#fcc934"/><path d="M11 11l-9.35 -5.400a10.8 10.8 0 0 1 18.7 0z" fill="#e0443a"/><path d="M11 11l-9.35 -5.400a10.8 10.8 0 0 0 4.2 14.900z" fill="#2ea24e"/><path d="M11 11l-5.2 9.400a10.8 10.8 0 0 1 -4.15 -14.800z" fill="#2ea24e"/><circle cx="11" cy="11" r="5" fill="#fff"/><circle cx="11" cy="11" r="4" fill="#4a8af4"/><path d="M14.5 15.500q0 -2.5 3 -2.500q2.8 0 2.8 2.500q0 2 -1.5 3l.800 3.500q.800 1 1.5 1.500h-7q1 -.500 1.5 -1.500l.500 -3.500q-1.6 -1 -1.6 -3z" fill="#f4f4f4"/></svg>
<svg class="i" style="left:700px;top:736px;" width="24" height="24" viewBox="0 0 24 24"><ellipse cx="8.5" cy="13.5" rx="7.5" ry="5" fill="#8a8a8a" opacity="0.85"/><ellipse cx="9.5" cy="7.5" rx="8.3" ry="6" fill="#f4f4f4" stroke="#e23a3a" stroke-width="1.5"/><path d="M6 3l8 12M12.5 3l-3 11" stroke="#7a7a7a" stroke-width="1.3"/><ellipse cx="13.5" cy="19.5" rx="2" ry="3.3" transform="rotate(20 13.5 19.5)" fill="none" stroke="#2a9ae0" stroke-width="1.5"/><ellipse cx="18.5" cy="15.5" rx="2" ry="3.3" transform="rotate(-60 18.5 15.5)" fill="none" stroke="#2a9ae0" stroke-width="1.5"/></svg>
<svg class="i" style="left:749px;top:736px;" width="24" height="24" viewBox="0 0 24 24"><rect x="10" y="3.5" width="12.5" height="17" fill="#fff" stroke="#2b579a" stroke-width="0.8"/><path d="M14.5 6.500h6.500M14.5 9h6.500M14.5 11.500h6.500M14.5 14h6.500M14.5 16.500h6.5" stroke="#2b579a" stroke-width="1.2"/><path d="M1 3.2l13 -2.200v22l-13 -2.200z" fill="#2b579a"/><text x="7.5" y="15.8" font-size="10.5" font-weight="bold" text-anchor="middle" fill="#fff" font-family="Liberation Sans,sans-serif">W</text></svg>
<svg class="i" style="left:799px;top:736px;" width="22" height="24" viewBox="0 0 22 24"><text x="10.7" y="20" font-size="25" font-weight="bold" text-anchor="middle" fill="#e8ec62" stroke="#c4cc3a" stroke-width="0.4" font-family="Liberation Serif,serif">Q</text><path d="M5 19.500l11 -14" stroke="#1e8a1e" stroke-width="1.8"/><path d="M19 1l-1.3 6.700l-4.9 -3.800zM2.5 22.500l1 -5.300l3.7 3z" fill="#1e8a1e"/></svg>
<svg class="i" style="left:1059px;top:744px;" width="13" height="8" viewBox="0 0 13 8"><path d="M0.5 7l6 -6l6 6" fill="none" stroke="#fff" stroke-width="1.3"/></svg>
<svg class="i" style="left:1089px;top:741px;" width="16" height="15" viewBox="0 0 16 15"><path d="M4.5 0.500l3.5 2.300l-3.5 2.300l-3.5 -2.300zM11.5 0.500l3.5 2.300l-3.5 2.300l-3.5 -2.300zM1 7.400l3.5 -2.300l3.5 2.300l-3.5 2.300zM8 7.400l3.5 -2.300l3.5 2.300l-3.5 2.300zM4.5 10.500l3.5 -2.200l3.5 2.200l-3.5 2.300z" fill="#fff"/><circle cx="11.5" cy="10.5" r="3.7" fill="#2fb34a"/><path d="M9.7 10.500l1.4 1.500l2.4 -2.8" fill="none" stroke="#fff" stroke-width="1.1"/></svg>
<svg class="i" style="left:1123px;top:742px;" width="14" height="14" viewBox="0 0 14 14"><path d="M1 13a12 12 0 0 1 12 -12M4.5 13a8.5 8.5 0 0 1 8.5 -8.500M8 13a5 5 0 0 1 5 -5" fill="none" stroke="#fff" stroke-width="1.2"/><circle cx="11.3" cy="11.5" r="1.5" fill="#fff"/><path d="M1 13a12 12 0 0 1 12 -12" fill="none" stroke="#8a8a8a" stroke-width="1.2"/></svg>
<svg class="i" style="left:1152px;top:741px;" width="18" height="13" viewBox="0 0 18 13"><rect x="5" y="3.5" width="11" height="7" fill="none" stroke="#fff" stroke-width="1.2"/><rect x="16.2" y="5.5" width="1.2" height="3" fill="#fff"/><rect x="6.5" y="5" width="8" height="4" fill="#fff"/><path d="M1.5 0.500v2.500M4 0.500v2.500M0.5 3h4.500v2.500q0 1.5 -2.25 1.500t-2.25 -1.500zM2.75 7v4h2" fill="none" stroke="#fff" stroke-width="1"/></svg>
<svg class="i" style="left:1184px;top:741px;" width="18" height="15" viewBox="0 0 18 15"><path d="M1 5h3l4 -4v13l-4 -4h-3z" fill="none" stroke="#fff" stroke-width="1.1" stroke-linejoin="round"/><path d="M10 5q1.8 2.5 0 5M12 3q3.3 4.5 0 9" fill="none" stroke="#fff" stroke-width="1.1"/><path d="M14.2 1q4.6 6.5 0 13" fill="none" stroke="#8a8a8a" stroke-width="1"/></svg>
<svg class="i" style="left:1217px;top:741px;" width="24" height="13" viewBox="0 0 24 13"><rect x="0.6" y="0.6" width="22" height="11.8" rx="1" fill="none" stroke="#fff" stroke-width="1.2"/><path d="M3 3.800h17.500M3 6.500h17.5" stroke="#fff" stroke-width="1.2" stroke-dasharray="1.3 1"/><path d="M3 9.300h2M6.5 9.300h10M18 9.300h2.5" stroke="#fff" stroke-width="1.2"/></svg>
<svg class="i" style="left:1325px;top:740px;" width="17" height="17" viewBox="0 0 17 17"><path d="M0.7 0.700h15v11h-5l-2.5 2.800l-2.5 -2.800h-5z" fill="none" stroke="#fff" stroke-width="1.3" stroke-linejoin="miter"/></svg>
</div>
</body></html>
